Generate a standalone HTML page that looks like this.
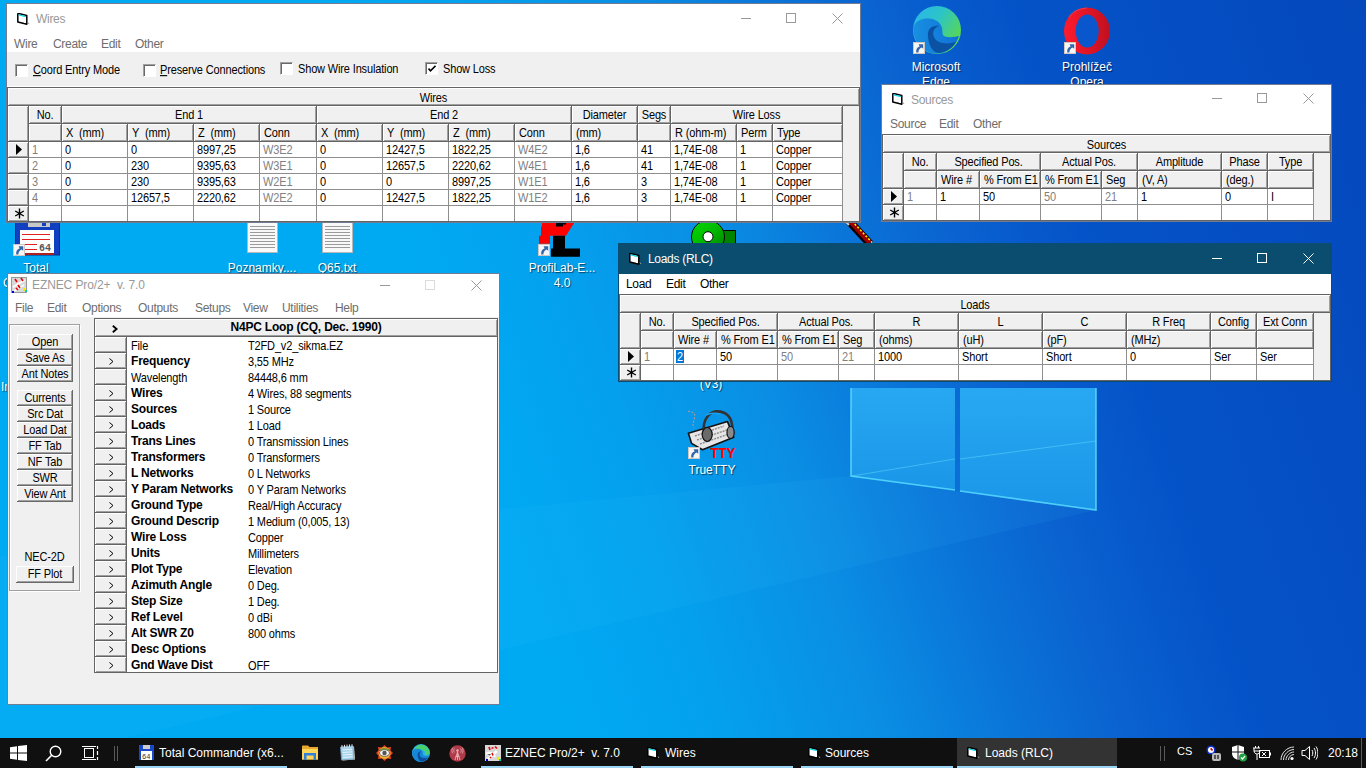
<!DOCTYPE html><html><head><meta charset="utf-8"><style>
html,body{margin:0;padding:0;width:1366px;height:768px;overflow:hidden;background:#0a78d8;}
div{position:absolute;box-sizing:border-box;}
.t{white-space:nowrap;font-family:'Liberation Sans',sans-serif;font-size:11px;line-height:16px;color:#000;letter-spacing:-0.15px;}
.s{transform:scaleY(1.12);transform-origin:0 4px;}
.m{font-size:12px;letter-spacing:-0.3px;}
.b{font-weight:bold;font-size:12px;letter-spacing:-0.2px;}
svg{position:absolute;}
</style></head><body>
<svg style="left:0;top:0" width="1366" height="768" viewBox="0 0 1366 768">
<defs>
<linearGradient id="bg1" gradientUnits="userSpaceOnUse" x1="0" y1="0" x2="1225" y2="-415"><stop offset="0.0000" stop-color="#00aaf3"/><stop offset="0.2319" stop-color="#00aaf3"/><stop offset="0.3479" stop-color="#04a0ee"/><stop offset="0.4638" stop-color="#0a8ee4"/><stop offset="0.5566" stop-color="#0a76d9"/><stop offset="0.6416" stop-color="#0a62d0"/><stop offset="0.7344" stop-color="#0553c8"/><stop offset="1.0000" stop-color="#0448bc"/></linearGradient>
<radialGradient id="glow" gradientUnits="userSpaceOnUse" cx="851" cy="460" r="420"><stop offset="0" stop-color="#50d0ff" stop-opacity="0.22"/><stop offset="1" stop-color="#50d0ff" stop-opacity="0"/></radialGradient>
<linearGradient id="pane" x1="0" y1="0" x2="0" y2="1"><stop offset="0" stop-color="#28a8f2"/><stop offset="1" stop-color="#1a96e8"/></linearGradient>
</defs>
<rect width="1366" height="768" fill="url(#bg1)"/>
<polygon points="851,476 1096,510 0,767 0,556" fill="#40c8ff" opacity="0.08"/>
<polygon points="851,388 955,388 955,490 851,476" fill="url(#pane)"/>
<polygon points="960,388 1096,388 1096,510 960,491" fill="url(#pane)"/>
<polyline points="851,388 851,476 955,490" fill="none" stroke="#58dcff" stroke-width="1.6" opacity="0.85"/>
<polyline points="960,491 1096,510 1096,388" fill="none" stroke="#58dcff" stroke-width="1.6" opacity="0.85"/>
<polyline points="852,476 955,459" fill="none" stroke="#6ae0ff" stroke-width="1" opacity="0.45"/>
<polyline points="960,459 1096,441" fill="none" stroke="#6ae0ff" stroke-width="1" opacity="0.45"/>
</svg>
<svg style="left:15px;top:222px" width="46" height="34" viewBox="0 0 46 34">
<rect x="0.5" y="0" width="44" height="33" fill="#1040c0" stroke="#0a2a80"/>
<rect x="13" y="1" width="22" height="4" fill="#c8c8c8"/><rect x="27" y="1" width="4" height="3" fill="#1040c0"/>
<rect x="5" y="8" width="34" height="25" fill="#fff"/>
<path d="M7 12.5H35M7 17.5H35M7 22.5H22M7 27.5H22" stroke="#e02020" stroke-width="1"/>
<rect x="5" y="31" width="34" height="2" fill="#b02020"/>
<text x="24" y="29" font-family="Liberation Mono" font-weight="bold" font-size="10" fill="#555">64</text>
</svg>
<svg style="left:13px;top:244px" width="12" height="12" viewBox="0 0 12 12"><rect x="0.5" y="0.5" width="11" height="11" fill="#f6f6f6" stroke="#d0c8c0"/><path d="M3.2 10.5C2.8 7.2 4.2 5 6.6 4.4L5.6 2.2H10.2V6.8L8.6 5.6C6.6 6.4 5.4 8.2 5.4 10.5Z" fill="#3466aa"/></svg>
<div class="t" style="left:6px;top:260px;width:60px;text-align:center;color:#fff;text-shadow:1px 1px 1px rgba(0,0,0,0.6);font-size:12px;letter-spacing:0;">Total</div>
<div class="t" style="left:-9px;top:275px;width:90px;text-align:center;color:#fff;text-shadow:1px 1px 1px rgba(0,0,0,0.6);font-size:12px;letter-spacing:0;">Commander</div>
<div class="t" style="left:1px;top:379px;color:#fff;text-shadow:1px 1px 1px rgba(0,0,0,0.6);font-size:12px;letter-spacing:0;">In</div>
<svg style="left:247px;top:222px" width="31" height="31" viewBox="0 0 31 31"><rect x="0.5" y="0.5" width="30" height="30" fill="#f8f8f8" stroke="#b8b8b8"/>
<path d="M3 4.5H28M3 7.5H28M3 10.5H28M3 13.5H28M3 16.5H28M3 19.5H28M3 22.5H28M3 25.5H28" stroke="#9a9a9a" stroke-width="1"/></svg>
<svg style="left:322px;top:222px" width="31" height="31" viewBox="0 0 31 31"><rect x="0.5" y="0.5" width="30" height="30" fill="#f8f8f8" stroke="#b8b8b8"/>
<path d="M3 4.5H28M3 7.5H28M3 10.5H28M3 13.5H28M3 16.5H28M3 19.5H28M3 22.5H28M3 25.5H28" stroke="#9a9a9a" stroke-width="1"/></svg>
<div class="t" style="left:222px;top:260px;width:80px;text-align:center;color:#fff;text-shadow:1px 1px 1px rgba(0,0,0,0.6);font-size:12px;letter-spacing:0;">Poznamky....</div>
<div class="t" style="left:307px;top:260px;width:60px;text-align:center;color:#fff;text-shadow:1px 1px 1px rgba(0,0,0,0.6);font-size:12px;letter-spacing:0;">Q65.txt</div>
<svg style="left:530px;top:218px" width="52" height="40" viewBox="0 0 52 40">
<path d="M12 4H44.7L36 17.8H20V25.8H9V17.8H11V8.6H12Z" fill="#f00"/>
<path d="M26 4H36V6.5H33V8.6H26Z" fill="#000"/>
<path d="M23 17.8H35V30.4H50V38.7H21V30.4H23Z" fill="#000"/>
</svg>
<svg style="left:538px;top:244px" width="12" height="12" viewBox="0 0 12 12"><rect x="0.5" y="0.5" width="11" height="11" fill="#f6f6f6" stroke="#d0c8c0"/><path d="M3.2 10.5C2.8 7.2 4.2 5 6.6 4.4L5.6 2.2H10.2V6.8L8.6 5.6C6.6 6.4 5.4 8.2 5.4 10.5Z" fill="#3466aa"/></svg>
<div class="t" style="left:522px;top:260px;width:80px;text-align:center;color:#fff;text-shadow:1px 1px 1px rgba(0,0,0,0.6);font-size:12px;letter-spacing:0;">ProfiLab-E...</div>
<div class="t" style="left:542px;top:275px;width:40px;text-align:center;color:#fff;text-shadow:1px 1px 1px rgba(0,0,0,0.6);font-size:12px;letter-spacing:0;">4.0</div>
<svg style="left:688px;top:219px" width="52" height="24" viewBox="0 0 52 24">
<defs><linearGradient id="gg" x1="0" y1="0" x2="1" y2="1"><stop offset="0" stop-color="#00dc00"/><stop offset="0.5" stop-color="#00b800"/><stop offset="1" stop-color="#007a00"/></linearGradient></defs>
<rect x="35.5" y="11.5" width="12" height="14" fill="#008400" stroke="#000"/>
<circle cx="20" cy="18" r="16.5" fill="url(#gg)" stroke="#000" stroke-width="1"/>
<circle cx="20" cy="17.7" r="5" fill="#fff" stroke="#000" stroke-width="1"/>
</svg>
<svg style="left:835px;top:222px" width="50" height="22" viewBox="0 0 50 22"><path d="M14 -1L35 22" stroke="#000" stroke-width="8"/><path d="M15 -1L35 21" stroke="#900" stroke-width="5"/><path d="M17 -1L37 20.5" stroke="#ff0" stroke-width="1.5" stroke-dasharray="2 2"/><path d="M11 0L14 3" stroke="#ccc" stroke-width="2"/></svg>
<div class="t" style="left:681px;top:376px;width:60px;text-align:center;color:#fff;text-shadow:1px 1px 1px rgba(0,0,0,0.6);font-size:12px;letter-spacing:0;">(V3)</div>
<svg style="left:687px;top:410px" width="50" height="50" viewBox="0 0 50 50">
<path d="M1 1.5C5 1 8.5 3 7.7 7C7 11 5 14 6.9 18" stroke="#9a9a9a" stroke-width="1.3" fill="none" stroke-dasharray="2 1.5"/>
<path d="M1.4 23.3L40.5 11.6L46.75 27.2L15.5 39.7L4.6 33.4Z" fill="#e6e6e6" stroke="#111" stroke-width="1.6" stroke-linejoin="round"/>
<path d="M8 26L37 16M10 30L40 20M13 34L42 24" stroke="#8a8a8a" stroke-width="1.4" stroke-dasharray="2 1"/>
<path d="M17 22C15 8 24 1.4 30 1.4C39 1.4 46 7 45.2 20" stroke="#333" stroke-width="2.6" fill="none"/>
<path d="M19 5C23 3 28 3 33 4" stroke="#1aa0f0" stroke-width="1.5" fill="none"/>
<ellipse cx="20.2" cy="24.5" rx="5" ry="7" fill="#6a6a6a" stroke="#111" stroke-width="1.2"/>
<ellipse cx="43.6" cy="22.5" rx="3.6" ry="6" fill="#8a8a8a" stroke="#111" stroke-width="1.2"/>
<text x="23.3" y="48.3" font-family="Liberation Sans" font-weight="bold" font-size="14" fill="#f00" textLength="25" lengthAdjust="spacingAndGlyphs">TTY</text>
</svg>
<svg style="left:688px;top:447px" width="12" height="12" viewBox="0 0 12 12"><rect x="0.5" y="0.5" width="11" height="11" fill="#f6f6f6" stroke="#d0c8c0"/><path d="M3.2 10.5C2.8 7.2 4.2 5 6.6 4.4L5.6 2.2H10.2V6.8L8.6 5.6C6.6 6.4 5.4 8.2 5.4 10.5Z" fill="#3466aa"/></svg>
<div class="t" style="left:677px;top:462px;width:70px;text-align:center;color:#fff;text-shadow:1px 1px 1px rgba(0,0,0,0.6);font-size:12px;letter-spacing:0;">TrueTTY</div>
<svg style="left:913px;top:6px" width="48" height="48" viewBox="0 0 48 48">
<defs><linearGradient id="eg1" x1="0" y1="0" x2="1" y2="0.6"><stop offset="0" stop-color="#2ab4ec"/><stop offset="0.5" stop-color="#2cc4c8"/><stop offset="1" stop-color="#5ad850"/></linearGradient>
<linearGradient id="eg2" x1="0" y1="0" x2="1" y2="0"><stop offset="0" stop-color="#1890e0"/><stop offset="1" stop-color="#1070d8"/></linearGradient></defs>
<circle cx="24" cy="24" r="24" fill="url(#eg1)"/>
<path d="M0.3 21C3 14 10 12 16 12.5C23 13 28 17 29 22C30 27 28 30 34 31C39 31.5 44 30.5 46 30C43 40 34 47.5 24 47.5C10 47.5 0 37 0.3 21Z" fill="url(#eg2)"/>
<path d="M15 30C14 23 19 19 26 20C21 22 19 26 21 31C23 37 33 39 43 36C39 43 31 47 25 47C19 46 15.5 38 15 30Z" fill="#0c52a4"/>
</svg>
<svg style="left:913px;top:42px" width="12" height="12" viewBox="0 0 12 12"><rect x="0.5" y="0.5" width="11" height="11" fill="#f6f6f6" stroke="#d0c8c0"/><path d="M3.2 10.5C2.8 7.2 4.2 5 6.6 4.4L5.6 2.2H10.2V6.8L8.6 5.6C6.6 6.4 5.4 8.2 5.4 10.5Z" fill="#3466aa"/></svg>
<div class="t" style="left:896px;top:59px;width:80px;text-align:center;color:#fff;text-shadow:1px 1px 1px rgba(0,0,0,0.6);font-size:12px;letter-spacing:0;">Microsoft</div>
<div class="t" style="left:906px;top:74px;width:60px;text-align:center;color:#fff;text-shadow:1px 1px 1px rgba(0,0,0,0.6);font-size:12px;letter-spacing:0;">Edge</div>
<svg style="left:1063px;top:7px" width="48" height="48" viewBox="0 0 48 48">
<defs><linearGradient id="og" x1="0" y1="0" x2="1" y2="0"><stop offset="0" stop-color="#ff1b2d"/><stop offset="1" stop-color="#c01020"/></linearGradient></defs>
<ellipse cx="24" cy="24" rx="23" ry="23.5" fill="url(#og)"/>
<ellipse cx="24.2" cy="24" rx="11.5" ry="16.5" fill="#0a56cc"/><path d="M6 10C10 4 16 2 24 1" stroke="#ff6070" stroke-width="1" fill="none" opacity="0.5"/>
</svg>
<svg style="left:1064px;top:42px" width="12" height="12" viewBox="0 0 12 12"><rect x="0.5" y="0.5" width="11" height="11" fill="#f6f6f6" stroke="#d0c8c0"/><path d="M3.2 10.5C2.8 7.2 4.2 5 6.6 4.4L5.6 2.2H10.2V6.8L8.6 5.6C6.6 6.4 5.4 8.2 5.4 10.5Z" fill="#3466aa"/></svg>
<div class="t" style="left:1047px;top:59px;width:80px;text-align:center;color:#fff;text-shadow:1px 1px 1px rgba(0,0,0,0.6);font-size:12px;letter-spacing:0;">Prohlížeč</div>
<div class="t" style="left:1057px;top:74px;width:60px;text-align:center;color:#fff;text-shadow:1px 1px 1px rgba(0,0,0,0.6);font-size:12px;letter-spacing:0;">Opera</div>
<div style="left:7px;top:273px;width:493px;height:432px;background:#f0f0f0;border:1px solid rgba(10,30,70,0.55);"></div>
<div style="left:8px;top:274px;width:491px;height:43px;background:#fff"></div>
<svg style="left:11px;top:277px" width="16" height="16" viewBox="0 0 16 16">
<rect x="0.5" y="0.5" width="15" height="15" fill="#d8d8d8" stroke="#999"/>
<path d="M2 10L14 3M3 14L13 8" stroke="#fff" stroke-width="2"/>
<path d="M4 2L6 5M10 1L12 4M7 8L9 11M5 11L7 13" stroke="#e00" stroke-width="1.6"/>
<rect x="1" y="14" width="2" height="2" fill="#00c"/><rect x="12" y="11" width="2" height="3" fill="#ee0"/><rect x="14" y="13" width="2" height="2" fill="#0cc"/>
</svg>
<div class="t m" style="left:32px;top:277px;color:#999;letter-spacing:-0.1px;">EZNEC Pro/2+&nbsp; v. 7.0</div>
<div style="left:380px;top:285px;width:10px;height:1px;background:#999"></div>
<div style="left:425px;top:280px;width:10px;height:10px;border:1px solid #dcdcdc"></div>
<svg style="left:471px;top:280px" width="11" height="11"><path d="M0.5 0.5L10.5 10.5M10.5 0.5L0.5 10.5" stroke="#999" stroke-width="1" fill="none"/></svg>
<div class="t m" style="left:15px;top:300px;color:#6d6d6d;">File</div>
<div class="t m" style="left:47px;top:300px;color:#6d6d6d;">Edit</div>
<div class="t m" style="left:82px;top:300px;color:#6d6d6d;">Options</div>
<div class="t m" style="left:138px;top:300px;color:#6d6d6d;">Outputs</div>
<div class="t m" style="left:195px;top:300px;color:#6d6d6d;">Setups</div>
<div class="t m" style="left:243px;top:300px;color:#6d6d6d;">View</div>
<div class="t m" style="left:282px;top:300px;color:#6d6d6d;">Utilities</div>
<div class="t m" style="left:335px;top:300px;color:#6d6d6d;">Help</div>
<div style="left:9px;top:324px;width:71px;height:267px;border:1px solid #a0a0a0;box-shadow:inset 1px 1px 0 #fff, 1px 1px 0 #fff;"></div>
<div style="left:17px;top:334px;width:56px;height:16px;background:#f0f0f0;border-right:1px solid #696969;border-bottom:1px solid #696969;box-shadow:inset 1px 1px 0 #fff,inset -1px -1px 0 #a0a0a0;"></div>
<div class="t s" style="left:17px;top:333px;width:56px;text-align:center;">Open</div>
<div style="left:17px;top:350px;width:56px;height:16px;background:#f0f0f0;border-right:1px solid #696969;border-bottom:1px solid #696969;box-shadow:inset 1px 1px 0 #fff,inset -1px -1px 0 #a0a0a0;"></div>
<div class="t s" style="left:17px;top:349px;width:56px;text-align:center;">Save As</div>
<div style="left:17px;top:366px;width:56px;height:16px;background:#f0f0f0;border-right:1px solid #696969;border-bottom:1px solid #696969;box-shadow:inset 1px 1px 0 #fff,inset -1px -1px 0 #a0a0a0;"></div>
<div class="t s" style="left:17px;top:365px;width:56px;text-align:center;">Ant Notes</div>
<div style="left:17px;top:390px;width:56px;height:16px;background:#f0f0f0;border-right:1px solid #696969;border-bottom:1px solid #696969;box-shadow:inset 1px 1px 0 #fff,inset -1px -1px 0 #a0a0a0;"></div>
<div class="t s" style="left:17px;top:389px;width:56px;text-align:center;">Currents</div>
<div style="left:17px;top:406px;width:56px;height:16px;background:#f0f0f0;border-right:1px solid #696969;border-bottom:1px solid #696969;box-shadow:inset 1px 1px 0 #fff,inset -1px -1px 0 #a0a0a0;"></div>
<div class="t s" style="left:17px;top:405px;width:56px;text-align:center;">Src Dat</div>
<div style="left:17px;top:422px;width:56px;height:16px;background:#f0f0f0;border-right:1px solid #696969;border-bottom:1px solid #696969;box-shadow:inset 1px 1px 0 #fff,inset -1px -1px 0 #a0a0a0;"></div>
<div class="t s" style="left:17px;top:421px;width:56px;text-align:center;">Load Dat</div>
<div style="left:17px;top:438px;width:56px;height:16px;background:#f0f0f0;border-right:1px solid #696969;border-bottom:1px solid #696969;box-shadow:inset 1px 1px 0 #fff,inset -1px -1px 0 #a0a0a0;"></div>
<div class="t s" style="left:17px;top:437px;width:56px;text-align:center;">FF Tab</div>
<div style="left:17px;top:454px;width:56px;height:16px;background:#f0f0f0;border-right:1px solid #696969;border-bottom:1px solid #696969;box-shadow:inset 1px 1px 0 #fff,inset -1px -1px 0 #a0a0a0;"></div>
<div class="t s" style="left:17px;top:453px;width:56px;text-align:center;">NF Tab</div>
<div style="left:17px;top:470px;width:56px;height:16px;background:#f0f0f0;border-right:1px solid #696969;border-bottom:1px solid #696969;box-shadow:inset 1px 1px 0 #fff,inset -1px -1px 0 #a0a0a0;"></div>
<div class="t s" style="left:17px;top:469px;width:56px;text-align:center;">SWR</div>
<div style="left:17px;top:486px;width:56px;height:16px;background:#f0f0f0;border-right:1px solid #696969;border-bottom:1px solid #696969;box-shadow:inset 1px 1px 0 #fff,inset -1px -1px 0 #a0a0a0;"></div>
<div class="t s" style="left:17px;top:485px;width:56px;text-align:center;">View Ant</div>
<div class="t s" style="left:9px;top:548px;width:71px;text-align:center;">NEC-2D</div>
<div style="left:16px;top:566px;width:58px;height:17px;background:#f0f0f0;border-right:1px solid #696969;border-bottom:1px solid #696969;box-shadow:inset 1px 1px 0 #fff,inset -1px -1px 0 #a0a0a0;"></div>
<div class="t s" style="left:16px;top:565px;width:58px;text-align:center;">FF Plot</div>
<div style="left:94px;top:318px;width:404px;height:355px;background:#fff;border:1px solid #646464;"></div>
<div style="left:95px;top:319px;width:402px;height:17px;background:#f0f0f0;box-shadow:inset 1px 1px 0 #fff,inset -1px -1px 0 #a0a0a0;"></div>
<div style="left:95px;top:336px;width:402px;height:1px;background:#646464"></div>
<svg style="left:112px;top:325px" width="6" height="8"><path d="M0.8 0.8L4.6 4L0.8 7.2" stroke="#000" stroke-width="1.8" fill="none"/></svg>
<div class="t b" style="left:126px;top:319px;width:360px;text-align:center;">N4PC Loop (CQ, Dec. 1990)</div>
<div style="left:95px;top:337px;width:31px;height:15px;background:#f0f0f0;box-shadow:inset 1px 1px 0 #fff,inset -1px -1px 0 #a0a0a0;"></div>
<div style="left:94px;top:352px;width:33px;height:1px;background:#646464"></div>
<div style="left:126px;top:336px;width:1px;height:17px;background:#646464"></div>
<div class="t s" style="left:131px;top:337px;">File</div>
<div class="t s" style="left:248px;top:337px;">T2FD_v2_sikma.EZ</div>
<div style="left:95px;top:353px;width:31px;height:15px;background:#f0f0f0;box-shadow:inset 1px 1px 0 #fff,inset -1px -1px 0 #a0a0a0;"></div>
<div style="left:94px;top:368px;width:33px;height:1px;background:#646464"></div>
<div style="left:126px;top:352px;width:1px;height:17px;background:#646464"></div>
<svg style="left:109px;top:358px" width="5" height="7"><path d="M0.5 0.5L4 3.5L0.5 6.5" stroke="#000" stroke-width="1" fill="none"/></svg>
<div class="t b" style="left:131px;top:353px;">Frequency</div>
<div class="t s" style="left:248px;top:353px;">3,55 MHz</div>
<div style="left:95px;top:369px;width:31px;height:15px;background:#f0f0f0;box-shadow:inset 1px 1px 0 #fff,inset -1px -1px 0 #a0a0a0;"></div>
<div style="left:94px;top:384px;width:33px;height:1px;background:#646464"></div>
<div style="left:126px;top:368px;width:1px;height:17px;background:#646464"></div>
<div class="t s" style="left:131px;top:369px;">Wavelength</div>
<div class="t s" style="left:248px;top:369px;">84448,6 mm</div>
<div style="left:95px;top:385px;width:31px;height:15px;background:#f0f0f0;box-shadow:inset 1px 1px 0 #fff,inset -1px -1px 0 #a0a0a0;"></div>
<div style="left:94px;top:400px;width:33px;height:1px;background:#646464"></div>
<div style="left:126px;top:384px;width:1px;height:17px;background:#646464"></div>
<svg style="left:109px;top:390px" width="5" height="7"><path d="M0.5 0.5L4 3.5L0.5 6.5" stroke="#000" stroke-width="1" fill="none"/></svg>
<div class="t b" style="left:131px;top:385px;">Wires</div>
<div class="t s" style="left:248px;top:385px;">4 Wires, 88 segments</div>
<div style="left:95px;top:401px;width:31px;height:15px;background:#f0f0f0;box-shadow:inset 1px 1px 0 #fff,inset -1px -1px 0 #a0a0a0;"></div>
<div style="left:94px;top:416px;width:33px;height:1px;background:#646464"></div>
<div style="left:126px;top:400px;width:1px;height:17px;background:#646464"></div>
<svg style="left:109px;top:406px" width="5" height="7"><path d="M0.5 0.5L4 3.5L0.5 6.5" stroke="#000" stroke-width="1" fill="none"/></svg>
<div class="t b" style="left:131px;top:401px;">Sources</div>
<div class="t s" style="left:248px;top:401px;">1 Source</div>
<div style="left:95px;top:417px;width:31px;height:15px;background:#f0f0f0;box-shadow:inset 1px 1px 0 #fff,inset -1px -1px 0 #a0a0a0;"></div>
<div style="left:94px;top:432px;width:33px;height:1px;background:#646464"></div>
<div style="left:126px;top:416px;width:1px;height:17px;background:#646464"></div>
<svg style="left:109px;top:422px" width="5" height="7"><path d="M0.5 0.5L4 3.5L0.5 6.5" stroke="#000" stroke-width="1" fill="none"/></svg>
<div class="t b" style="left:131px;top:417px;">Loads</div>
<div class="t s" style="left:248px;top:417px;">1 Load</div>
<div style="left:95px;top:433px;width:31px;height:15px;background:#f0f0f0;box-shadow:inset 1px 1px 0 #fff,inset -1px -1px 0 #a0a0a0;"></div>
<div style="left:94px;top:448px;width:33px;height:1px;background:#646464"></div>
<div style="left:126px;top:432px;width:1px;height:17px;background:#646464"></div>
<svg style="left:109px;top:438px" width="5" height="7"><path d="M0.5 0.5L4 3.5L0.5 6.5" stroke="#000" stroke-width="1" fill="none"/></svg>
<div class="t b" style="left:131px;top:433px;">Trans Lines</div>
<div class="t s" style="left:248px;top:433px;">0 Transmission Lines</div>
<div style="left:95px;top:449px;width:31px;height:15px;background:#f0f0f0;box-shadow:inset 1px 1px 0 #fff,inset -1px -1px 0 #a0a0a0;"></div>
<div style="left:94px;top:464px;width:33px;height:1px;background:#646464"></div>
<div style="left:126px;top:448px;width:1px;height:17px;background:#646464"></div>
<svg style="left:109px;top:454px" width="5" height="7"><path d="M0.5 0.5L4 3.5L0.5 6.5" stroke="#000" stroke-width="1" fill="none"/></svg>
<div class="t b" style="left:131px;top:449px;">Transformers</div>
<div class="t s" style="left:248px;top:449px;">0 Transformers</div>
<div style="left:95px;top:465px;width:31px;height:15px;background:#f0f0f0;box-shadow:inset 1px 1px 0 #fff,inset -1px -1px 0 #a0a0a0;"></div>
<div style="left:94px;top:480px;width:33px;height:1px;background:#646464"></div>
<div style="left:126px;top:464px;width:1px;height:17px;background:#646464"></div>
<svg style="left:109px;top:470px" width="5" height="7"><path d="M0.5 0.5L4 3.5L0.5 6.5" stroke="#000" stroke-width="1" fill="none"/></svg>
<div class="t b" style="left:131px;top:465px;">L Networks</div>
<div class="t s" style="left:248px;top:465px;">0 L Networks</div>
<div style="left:95px;top:481px;width:31px;height:15px;background:#f0f0f0;box-shadow:inset 1px 1px 0 #fff,inset -1px -1px 0 #a0a0a0;"></div>
<div style="left:94px;top:496px;width:33px;height:1px;background:#646464"></div>
<div style="left:126px;top:480px;width:1px;height:17px;background:#646464"></div>
<svg style="left:109px;top:486px" width="5" height="7"><path d="M0.5 0.5L4 3.5L0.5 6.5" stroke="#000" stroke-width="1" fill="none"/></svg>
<div class="t b" style="left:131px;top:481px;">Y Param Networks</div>
<div class="t s" style="left:248px;top:481px;">0 Y Param Networks</div>
<div style="left:95px;top:497px;width:31px;height:15px;background:#f0f0f0;box-shadow:inset 1px 1px 0 #fff,inset -1px -1px 0 #a0a0a0;"></div>
<div style="left:94px;top:512px;width:33px;height:1px;background:#646464"></div>
<div style="left:126px;top:496px;width:1px;height:17px;background:#646464"></div>
<svg style="left:109px;top:502px" width="5" height="7"><path d="M0.5 0.5L4 3.5L0.5 6.5" stroke="#000" stroke-width="1" fill="none"/></svg>
<div class="t b" style="left:131px;top:497px;">Ground Type</div>
<div class="t s" style="left:248px;top:497px;">Real/High Accuracy</div>
<div style="left:95px;top:513px;width:31px;height:15px;background:#f0f0f0;box-shadow:inset 1px 1px 0 #fff,inset -1px -1px 0 #a0a0a0;"></div>
<div style="left:94px;top:528px;width:33px;height:1px;background:#646464"></div>
<div style="left:126px;top:512px;width:1px;height:17px;background:#646464"></div>
<svg style="left:109px;top:518px" width="5" height="7"><path d="M0.5 0.5L4 3.5L0.5 6.5" stroke="#000" stroke-width="1" fill="none"/></svg>
<div class="t b" style="left:131px;top:513px;">Ground Descrip</div>
<div class="t s" style="left:248px;top:513px;">1 Medium (0,005, 13)</div>
<div style="left:95px;top:529px;width:31px;height:15px;background:#f0f0f0;box-shadow:inset 1px 1px 0 #fff,inset -1px -1px 0 #a0a0a0;"></div>
<div style="left:94px;top:544px;width:33px;height:1px;background:#646464"></div>
<div style="left:126px;top:528px;width:1px;height:17px;background:#646464"></div>
<svg style="left:109px;top:534px" width="5" height="7"><path d="M0.5 0.5L4 3.5L0.5 6.5" stroke="#000" stroke-width="1" fill="none"/></svg>
<div class="t b" style="left:131px;top:529px;">Wire Loss</div>
<div class="t s" style="left:248px;top:529px;">Copper</div>
<div style="left:95px;top:545px;width:31px;height:15px;background:#f0f0f0;box-shadow:inset 1px 1px 0 #fff,inset -1px -1px 0 #a0a0a0;"></div>
<div style="left:94px;top:560px;width:33px;height:1px;background:#646464"></div>
<div style="left:126px;top:544px;width:1px;height:17px;background:#646464"></div>
<svg style="left:109px;top:550px" width="5" height="7"><path d="M0.5 0.5L4 3.5L0.5 6.5" stroke="#000" stroke-width="1" fill="none"/></svg>
<div class="t b" style="left:131px;top:545px;">Units</div>
<div class="t s" style="left:248px;top:545px;">Millimeters</div>
<div style="left:95px;top:561px;width:31px;height:15px;background:#f0f0f0;box-shadow:inset 1px 1px 0 #fff,inset -1px -1px 0 #a0a0a0;"></div>
<div style="left:94px;top:576px;width:33px;height:1px;background:#646464"></div>
<div style="left:126px;top:560px;width:1px;height:17px;background:#646464"></div>
<svg style="left:109px;top:566px" width="5" height="7"><path d="M0.5 0.5L4 3.5L0.5 6.5" stroke="#000" stroke-width="1" fill="none"/></svg>
<div class="t b" style="left:131px;top:561px;">Plot Type</div>
<div class="t s" style="left:248px;top:561px;">Elevation</div>
<div style="left:95px;top:577px;width:31px;height:15px;background:#f0f0f0;box-shadow:inset 1px 1px 0 #fff,inset -1px -1px 0 #a0a0a0;"></div>
<div style="left:94px;top:592px;width:33px;height:1px;background:#646464"></div>
<div style="left:126px;top:576px;width:1px;height:17px;background:#646464"></div>
<svg style="left:109px;top:582px" width="5" height="7"><path d="M0.5 0.5L4 3.5L0.5 6.5" stroke="#000" stroke-width="1" fill="none"/></svg>
<div class="t b" style="left:131px;top:577px;">Azimuth Angle</div>
<div class="t s" style="left:248px;top:577px;">0 Deg.</div>
<div style="left:95px;top:593px;width:31px;height:15px;background:#f0f0f0;box-shadow:inset 1px 1px 0 #fff,inset -1px -1px 0 #a0a0a0;"></div>
<div style="left:94px;top:608px;width:33px;height:1px;background:#646464"></div>
<div style="left:126px;top:592px;width:1px;height:17px;background:#646464"></div>
<svg style="left:109px;top:598px" width="5" height="7"><path d="M0.5 0.5L4 3.5L0.5 6.5" stroke="#000" stroke-width="1" fill="none"/></svg>
<div class="t b" style="left:131px;top:593px;">Step Size</div>
<div class="t s" style="left:248px;top:593px;">1 Deg.</div>
<div style="left:95px;top:609px;width:31px;height:15px;background:#f0f0f0;box-shadow:inset 1px 1px 0 #fff,inset -1px -1px 0 #a0a0a0;"></div>
<div style="left:94px;top:624px;width:33px;height:1px;background:#646464"></div>
<div style="left:126px;top:608px;width:1px;height:17px;background:#646464"></div>
<svg style="left:109px;top:614px" width="5" height="7"><path d="M0.5 0.5L4 3.5L0.5 6.5" stroke="#000" stroke-width="1" fill="none"/></svg>
<div class="t b" style="left:131px;top:609px;">Ref Level</div>
<div class="t s" style="left:248px;top:609px;">0 dBi</div>
<div style="left:95px;top:625px;width:31px;height:15px;background:#f0f0f0;box-shadow:inset 1px 1px 0 #fff,inset -1px -1px 0 #a0a0a0;"></div>
<div style="left:94px;top:640px;width:33px;height:1px;background:#646464"></div>
<div style="left:126px;top:624px;width:1px;height:17px;background:#646464"></div>
<svg style="left:109px;top:630px" width="5" height="7"><path d="M0.5 0.5L4 3.5L0.5 6.5" stroke="#000" stroke-width="1" fill="none"/></svg>
<div class="t b" style="left:131px;top:625px;">Alt SWR Z0</div>
<div class="t s" style="left:248px;top:625px;">800 ohms</div>
<div style="left:95px;top:641px;width:31px;height:15px;background:#f0f0f0;box-shadow:inset 1px 1px 0 #fff,inset -1px -1px 0 #a0a0a0;"></div>
<div style="left:94px;top:656px;width:33px;height:1px;background:#646464"></div>
<div style="left:126px;top:640px;width:1px;height:17px;background:#646464"></div>
<svg style="left:109px;top:646px" width="5" height="7"><path d="M0.5 0.5L4 3.5L0.5 6.5" stroke="#000" stroke-width="1" fill="none"/></svg>
<div class="t b" style="left:131px;top:641px;">Desc Options</div>
<div style="left:95px;top:657px;width:31px;height:15px;background:#f0f0f0;box-shadow:inset 1px 1px 0 #fff,inset -1px -1px 0 #a0a0a0;"></div>
<div style="left:94px;top:672px;width:33px;height:1px;background:#646464"></div>
<div style="left:126px;top:656px;width:1px;height:17px;background:#646464"></div>
<svg style="left:109px;top:662px" width="5" height="7"><path d="M0.5 0.5L4 3.5L0.5 6.5" stroke="#000" stroke-width="1" fill="none"/></svg>
<div class="t b" style="left:131px;top:657px;">Gnd Wave Dist</div>
<div class="t s" style="left:248px;top:657px;">OFF</div>
<div style="left:6px;top:3px;width:855px;height:220px;background:#f0f0f0;border:1px solid rgba(10,30,70,0.55);"></div>
<div style="left:7px;top:4px;width:853px;height:48px;background:#fff"></div>
<svg style="left:17px;top:13px" width="13" height="13" viewBox="0 0 13 13"><path d="M0.8 0.8H2.8L9.8 2.6V11.2L7 10.6L0.8 9Z" fill="#fff" stroke="#000" stroke-width="1.5" stroke-linejoin="round"/><path d="M1.6 1.9L9 3.7" stroke="#18d8e8" stroke-width="1.3" fill="none"/><path d="M11 9.5L12 11" stroke="#999" stroke-width="1"/></svg>
<div class="t m" style="left:36px;top:11px;color:#999;">Wires</div>
<div style="left:741px;top:18px;width:10px;height:1px;background:#999"></div>
<div style="left:786px;top:13px;width:10px;height:10px;border:1px solid #999"></div>
<svg style="left:832px;top:13px" width="11" height="11"><path d="M0.5 0.5L10.5 10.5M10.5 0.5L0.5 10.5" stroke="#999" stroke-width="1" fill="none"/></svg>
<div class="t m" style="left:14px;top:36px;color:#6d6d6d;">Wire</div>
<div class="t m" style="left:53px;top:36px;color:#6d6d6d;">Create</div>
<div class="t m" style="left:101px;top:36px;color:#6d6d6d;">Edit</div>
<div class="t m" style="left:135px;top:36px;color:#6d6d6d;">Other</div>
<div style="left:7px;top:52px;width:853px;height:1px;background:#f0f0f0"></div>
<div style="left:15px;top:64px;width:13px;height:13px;background:#fff;border-top:1px solid #a0a0a0;border-left:1px solid #a0a0a0;border-right:1px solid #fff;border-bottom:1px solid #fff;box-shadow:inset 1px 1px 0 #696969;"></div>
<div class="t s" style="left:33px;top:61px;"><u>C</u>oord Entry Mode</div>
<div style="left:143px;top:64px;width:13px;height:13px;background:#fff;border-top:1px solid #a0a0a0;border-left:1px solid #a0a0a0;border-right:1px solid #fff;border-bottom:1px solid #fff;box-shadow:inset 1px 1px 0 #696969;"></div>
<div class="t s" style="left:160px;top:61px;"><u>P</u>reserve Connections</div>
<div style="left:280px;top:62px;width:13px;height:13px;background:#fff;border-top:1px solid #a0a0a0;border-left:1px solid #a0a0a0;border-right:1px solid #fff;border-bottom:1px solid #fff;box-shadow:inset 1px 1px 0 #696969;"></div>
<div class="t s" style="left:298px;top:60px;">Show Wire Insulation</div>
<div style="left:425px;top:62px;width:13px;height:13px;background:#fff;border-top:1px solid #a0a0a0;border-left:1px solid #a0a0a0;border-right:1px solid #fff;border-bottom:1px solid #fff;box-shadow:inset 1px 1px 0 #696969;"></div>
<svg style="left:428px;top:65px" width="8" height="8"><path d="M0.5 3.5L2.5 5.8L7.5 0.8" stroke="#000" stroke-width="1.6" fill="none"/></svg>
<div class="t s" style="left:443px;top:60px;">Show Loss</div>
<div style="left:7px;top:86px;width:853px;height:1px;background:#fff"></div>
<div style="left:7px;top:87px;width:853px;height:135px;background:#f0f0f0;"></div>
<div style="left:8px;top:88px;width:851px;height:17px;background:#f0f0f0;box-shadow:inset 1px 1px 0 #fff,inset -1px -1px 0 #a0a0a0;"></div>
<div class="t s" style="left:8px;top:89px;width:851px;text-align:center;">Wires</div>
<div style="left:8px;top:105px;width:851px;height:1px;background:#646464"></div>
<div style="left:29px;top:142px;width:814px;height:79px;background:#fff"></div>
<div style="left:8px;top:106px;width:20px;height:35px;background:#f0f0f0;box-shadow:inset 1px 1px 0 #fff,inset -1px -1px 0 #a0a0a0;"></div>
<div style="left:28px;top:105px;width:1px;height:37px;background:#646464"></div>
<div style="left:7px;top:141px;width:22px;height:1px;background:#646464"></div>
<div style="left:29px;top:106px;width:32px;height:17px;background:#f0f0f0;box-shadow:inset 1px 1px 0 #fff,inset -1px -1px 0 #a0a0a0;"></div>
<div style="left:61px;top:105px;width:1px;height:19px;background:#646464"></div>
<div style="left:28px;top:123px;width:34px;height:1px;background:#646464"></div>
<div class="t s" style="left:29px;top:106px;width:32px;text-align:center;">No.</div>
<div style="left:29px;top:124px;width:32px;height:17px;background:#f0f0f0;box-shadow:inset 1px 1px 0 #fff,inset -1px -1px 0 #a0a0a0;"></div>
<div style="left:61px;top:123px;width:1px;height:19px;background:#646464"></div>
<div style="left:28px;top:141px;width:34px;height:1px;background:#646464"></div>
<div style="left:62px;top:106px;width:254px;height:17px;background:#f0f0f0;box-shadow:inset 1px 1px 0 #fff,inset -1px -1px 0 #a0a0a0;"></div>
<div style="left:316px;top:105px;width:1px;height:19px;background:#646464"></div>
<div style="left:61px;top:123px;width:256px;height:1px;background:#646464"></div>
<div class="t s" style="left:62px;top:106px;width:254px;text-align:center;">End 1</div>
<div style="left:317px;top:106px;width:254px;height:17px;background:#f0f0f0;box-shadow:inset 1px 1px 0 #fff,inset -1px -1px 0 #a0a0a0;"></div>
<div style="left:571px;top:105px;width:1px;height:19px;background:#646464"></div>
<div style="left:316px;top:123px;width:256px;height:1px;background:#646464"></div>
<div class="t s" style="left:317px;top:106px;width:254px;text-align:center;">End 2</div>
<div style="left:62px;top:124px;width:65px;height:17px;background:#f0f0f0;box-shadow:inset 1px 1px 0 #fff,inset -1px -1px 0 #a0a0a0;"></div>
<div style="left:127px;top:123px;width:1px;height:19px;background:#646464"></div>
<div style="left:61px;top:141px;width:67px;height:1px;background:#646464"></div>
<div class="t s" style="left:66px;top:124px;">X&nbsp; (mm)</div>
<div style="left:128px;top:124px;width:65px;height:17px;background:#f0f0f0;box-shadow:inset 1px 1px 0 #fff,inset -1px -1px 0 #a0a0a0;"></div>
<div style="left:193px;top:123px;width:1px;height:19px;background:#646464"></div>
<div style="left:127px;top:141px;width:67px;height:1px;background:#646464"></div>
<div class="t s" style="left:132px;top:124px;">Y&nbsp; (mm)</div>
<div style="left:194px;top:124px;width:65px;height:17px;background:#f0f0f0;box-shadow:inset 1px 1px 0 #fff,inset -1px -1px 0 #a0a0a0;"></div>
<div style="left:259px;top:123px;width:1px;height:19px;background:#646464"></div>
<div style="left:193px;top:141px;width:67px;height:1px;background:#646464"></div>
<div class="t s" style="left:198px;top:124px;">Z&nbsp; (mm)</div>
<div style="left:260px;top:124px;width:56px;height:17px;background:#f0f0f0;box-shadow:inset 1px 1px 0 #fff,inset -1px -1px 0 #a0a0a0;"></div>
<div style="left:316px;top:123px;width:1px;height:19px;background:#646464"></div>
<div style="left:259px;top:141px;width:58px;height:1px;background:#646464"></div>
<div class="t s" style="left:264px;top:124px;">Conn</div>
<div style="left:317px;top:124px;width:65px;height:17px;background:#f0f0f0;box-shadow:inset 1px 1px 0 #fff,inset -1px -1px 0 #a0a0a0;"></div>
<div style="left:382px;top:123px;width:1px;height:19px;background:#646464"></div>
<div style="left:316px;top:141px;width:67px;height:1px;background:#646464"></div>
<div class="t s" style="left:321px;top:124px;">X&nbsp; (mm)</div>
<div style="left:383px;top:124px;width:65px;height:17px;background:#f0f0f0;box-shadow:inset 1px 1px 0 #fff,inset -1px -1px 0 #a0a0a0;"></div>
<div style="left:448px;top:123px;width:1px;height:19px;background:#646464"></div>
<div style="left:382px;top:141px;width:67px;height:1px;background:#646464"></div>
<div class="t s" style="left:387px;top:124px;">Y&nbsp; (mm)</div>
<div style="left:449px;top:124px;width:65px;height:17px;background:#f0f0f0;box-shadow:inset 1px 1px 0 #fff,inset -1px -1px 0 #a0a0a0;"></div>
<div style="left:514px;top:123px;width:1px;height:19px;background:#646464"></div>
<div style="left:448px;top:141px;width:67px;height:1px;background:#646464"></div>
<div class="t s" style="left:453px;top:124px;">Z&nbsp; (mm)</div>
<div style="left:515px;top:124px;width:56px;height:17px;background:#f0f0f0;box-shadow:inset 1px 1px 0 #fff,inset -1px -1px 0 #a0a0a0;"></div>
<div style="left:571px;top:123px;width:1px;height:19px;background:#646464"></div>
<div style="left:514px;top:141px;width:58px;height:1px;background:#646464"></div>
<div class="t s" style="left:519px;top:124px;">Conn</div>
<div style="left:572px;top:106px;width:65px;height:17px;background:#f0f0f0;box-shadow:inset 1px 1px 0 #fff,inset -1px -1px 0 #a0a0a0;"></div>
<div style="left:637px;top:105px;width:1px;height:19px;background:#646464"></div>
<div style="left:571px;top:123px;width:67px;height:1px;background:#646464"></div>
<div class="t s" style="left:572px;top:106px;width:65px;text-align:center;">Diameter</div>
<div style="left:572px;top:124px;width:65px;height:17px;background:#f0f0f0;box-shadow:inset 1px 1px 0 #fff,inset -1px -1px 0 #a0a0a0;"></div>
<div style="left:637px;top:123px;width:1px;height:19px;background:#646464"></div>
<div style="left:571px;top:141px;width:67px;height:1px;background:#646464"></div>
<div class="t s" style="left:576px;top:124px;">(mm)</div>
<div style="left:638px;top:106px;width:32px;height:17px;background:#f0f0f0;box-shadow:inset 1px 1px 0 #fff,inset -1px -1px 0 #a0a0a0;"></div>
<div style="left:670px;top:105px;width:1px;height:19px;background:#646464"></div>
<div style="left:637px;top:123px;width:34px;height:1px;background:#646464"></div>
<div class="t s" style="left:638px;top:106px;width:32px;text-align:center;">Segs</div>
<div style="left:638px;top:124px;width:32px;height:17px;background:#f0f0f0;box-shadow:inset 1px 1px 0 #fff,inset -1px -1px 0 #a0a0a0;"></div>
<div style="left:670px;top:123px;width:1px;height:19px;background:#646464"></div>
<div style="left:637px;top:141px;width:34px;height:1px;background:#646464"></div>
<div style="left:671px;top:106px;width:171px;height:17px;background:#f0f0f0;box-shadow:inset 1px 1px 0 #fff,inset -1px -1px 0 #a0a0a0;"></div>
<div style="left:842px;top:105px;width:1px;height:19px;background:#646464"></div>
<div style="left:670px;top:123px;width:173px;height:1px;background:#646464"></div>
<div class="t s" style="left:671px;top:106px;width:171px;text-align:center;">Wire Loss</div>
<div style="left:671px;top:124px;width:65px;height:17px;background:#f0f0f0;box-shadow:inset 1px 1px 0 #fff,inset -1px -1px 0 #a0a0a0;"></div>
<div style="left:736px;top:123px;width:1px;height:19px;background:#646464"></div>
<div style="left:670px;top:141px;width:67px;height:1px;background:#646464"></div>
<div class="t s" style="left:675px;top:124px;">R (ohm-m)</div>
<div style="left:737px;top:124px;width:35px;height:17px;background:#f0f0f0;box-shadow:inset 1px 1px 0 #fff,inset -1px -1px 0 #a0a0a0;"></div>
<div style="left:772px;top:123px;width:1px;height:19px;background:#646464"></div>
<div style="left:736px;top:141px;width:37px;height:1px;background:#646464"></div>
<div class="t s" style="left:741px;top:124px;">Perm</div>
<div style="left:773px;top:124px;width:69px;height:17px;background:#f0f0f0;box-shadow:inset 1px 1px 0 #fff,inset -1px -1px 0 #a0a0a0;"></div>
<div style="left:842px;top:123px;width:1px;height:19px;background:#646464"></div>
<div style="left:772px;top:141px;width:71px;height:1px;background:#646464"></div>
<div class="t s" style="left:777px;top:124px;">Type</div>
<div style="left:8px;top:142px;width:20px;height:15px;background:#f0f0f0;box-shadow:inset 1px 1px 0 #fff,inset -1px -1px 0 #a0a0a0;"></div>
<div style="left:7px;top:157px;width:22px;height:1px;background:#646464"></div>
<div style="left:28px;top:141px;width:1px;height:17px;background:#646464"></div>
<div style="left:29px;top:157px;width:814px;height:1px;background:#8e8e8e"></div>
<div style="left:61px;top:142px;width:1px;height:16px;background:#8e8e8e"></div>
<div style="left:127px;top:142px;width:1px;height:16px;background:#8e8e8e"></div>
<div style="left:193px;top:142px;width:1px;height:16px;background:#8e8e8e"></div>
<div style="left:259px;top:142px;width:1px;height:16px;background:#8e8e8e"></div>
<div style="left:316px;top:142px;width:1px;height:16px;background:#8e8e8e"></div>
<div style="left:382px;top:142px;width:1px;height:16px;background:#8e8e8e"></div>
<div style="left:448px;top:142px;width:1px;height:16px;background:#8e8e8e"></div>
<div style="left:514px;top:142px;width:1px;height:16px;background:#8e8e8e"></div>
<div style="left:571px;top:142px;width:1px;height:16px;background:#8e8e8e"></div>
<div style="left:637px;top:142px;width:1px;height:16px;background:#8e8e8e"></div>
<div style="left:670px;top:142px;width:1px;height:16px;background:#8e8e8e"></div>
<div style="left:736px;top:142px;width:1px;height:16px;background:#8e8e8e"></div>
<div style="left:772px;top:142px;width:1px;height:16px;background:#8e8e8e"></div>
<div style="left:842px;top:142px;width:1px;height:16px;background:#8e8e8e"></div>
<div class="t s" style="left:32px;top:141px;color:#808080;">1</div>
<div class="t s" style="left:65px;top:141px;color:#000;">0</div>
<div class="t s" style="left:131px;top:141px;color:#000;">0</div>
<div class="t s" style="left:197px;top:141px;color:#000;">8997,25</div>
<div class="t s" style="left:263px;top:141px;color:#808080;">W3E2</div>
<div class="t s" style="left:320px;top:141px;color:#000;">0</div>
<div class="t s" style="left:386px;top:141px;color:#000;">12427,5</div>
<div class="t s" style="left:452px;top:141px;color:#000;">1822,25</div>
<div class="t s" style="left:518px;top:141px;color:#808080;">W4E2</div>
<div class="t s" style="left:575px;top:141px;color:#000;">1,6</div>
<div class="t s" style="left:641px;top:141px;color:#000;">41</div>
<div class="t s" style="left:674px;top:141px;color:#000;">1,74E-08</div>
<div class="t s" style="left:740px;top:141px;color:#000;">1</div>
<div class="t s" style="left:776px;top:141px;color:#000;">Copper</div>
<div style="left:8px;top:158px;width:20px;height:15px;background:#f0f0f0;box-shadow:inset 1px 1px 0 #fff,inset -1px -1px 0 #a0a0a0;"></div>
<div style="left:7px;top:173px;width:22px;height:1px;background:#646464"></div>
<div style="left:28px;top:157px;width:1px;height:17px;background:#646464"></div>
<div style="left:29px;top:173px;width:814px;height:1px;background:#8e8e8e"></div>
<div style="left:61px;top:158px;width:1px;height:16px;background:#8e8e8e"></div>
<div style="left:127px;top:158px;width:1px;height:16px;background:#8e8e8e"></div>
<div style="left:193px;top:158px;width:1px;height:16px;background:#8e8e8e"></div>
<div style="left:259px;top:158px;width:1px;height:16px;background:#8e8e8e"></div>
<div style="left:316px;top:158px;width:1px;height:16px;background:#8e8e8e"></div>
<div style="left:382px;top:158px;width:1px;height:16px;background:#8e8e8e"></div>
<div style="left:448px;top:158px;width:1px;height:16px;background:#8e8e8e"></div>
<div style="left:514px;top:158px;width:1px;height:16px;background:#8e8e8e"></div>
<div style="left:571px;top:158px;width:1px;height:16px;background:#8e8e8e"></div>
<div style="left:637px;top:158px;width:1px;height:16px;background:#8e8e8e"></div>
<div style="left:670px;top:158px;width:1px;height:16px;background:#8e8e8e"></div>
<div style="left:736px;top:158px;width:1px;height:16px;background:#8e8e8e"></div>
<div style="left:772px;top:158px;width:1px;height:16px;background:#8e8e8e"></div>
<div style="left:842px;top:158px;width:1px;height:16px;background:#8e8e8e"></div>
<div class="t s" style="left:32px;top:157px;color:#808080;">2</div>
<div class="t s" style="left:65px;top:157px;color:#000;">0</div>
<div class="t s" style="left:131px;top:157px;color:#000;">230</div>
<div class="t s" style="left:197px;top:157px;color:#000;">9395,63</div>
<div class="t s" style="left:263px;top:157px;color:#808080;">W3E1</div>
<div class="t s" style="left:320px;top:157px;color:#000;">0</div>
<div class="t s" style="left:386px;top:157px;color:#000;">12657,5</div>
<div class="t s" style="left:452px;top:157px;color:#000;">2220,62</div>
<div class="t s" style="left:518px;top:157px;color:#808080;">W4E1</div>
<div class="t s" style="left:575px;top:157px;color:#000;">1,6</div>
<div class="t s" style="left:641px;top:157px;color:#000;">41</div>
<div class="t s" style="left:674px;top:157px;color:#000;">1,74E-08</div>
<div class="t s" style="left:740px;top:157px;color:#000;">1</div>
<div class="t s" style="left:776px;top:157px;color:#000;">Copper</div>
<div style="left:8px;top:174px;width:20px;height:15px;background:#f0f0f0;box-shadow:inset 1px 1px 0 #fff,inset -1px -1px 0 #a0a0a0;"></div>
<div style="left:7px;top:189px;width:22px;height:1px;background:#646464"></div>
<div style="left:28px;top:173px;width:1px;height:17px;background:#646464"></div>
<div style="left:29px;top:189px;width:814px;height:1px;background:#8e8e8e"></div>
<div style="left:61px;top:174px;width:1px;height:16px;background:#8e8e8e"></div>
<div style="left:127px;top:174px;width:1px;height:16px;background:#8e8e8e"></div>
<div style="left:193px;top:174px;width:1px;height:16px;background:#8e8e8e"></div>
<div style="left:259px;top:174px;width:1px;height:16px;background:#8e8e8e"></div>
<div style="left:316px;top:174px;width:1px;height:16px;background:#8e8e8e"></div>
<div style="left:382px;top:174px;width:1px;height:16px;background:#8e8e8e"></div>
<div style="left:448px;top:174px;width:1px;height:16px;background:#8e8e8e"></div>
<div style="left:514px;top:174px;width:1px;height:16px;background:#8e8e8e"></div>
<div style="left:571px;top:174px;width:1px;height:16px;background:#8e8e8e"></div>
<div style="left:637px;top:174px;width:1px;height:16px;background:#8e8e8e"></div>
<div style="left:670px;top:174px;width:1px;height:16px;background:#8e8e8e"></div>
<div style="left:736px;top:174px;width:1px;height:16px;background:#8e8e8e"></div>
<div style="left:772px;top:174px;width:1px;height:16px;background:#8e8e8e"></div>
<div style="left:842px;top:174px;width:1px;height:16px;background:#8e8e8e"></div>
<div class="t s" style="left:32px;top:173px;color:#808080;">3</div>
<div class="t s" style="left:65px;top:173px;color:#000;">0</div>
<div class="t s" style="left:131px;top:173px;color:#000;">230</div>
<div class="t s" style="left:197px;top:173px;color:#000;">9395,63</div>
<div class="t s" style="left:263px;top:173px;color:#808080;">W2E1</div>
<div class="t s" style="left:320px;top:173px;color:#000;">0</div>
<div class="t s" style="left:386px;top:173px;color:#000;">0</div>
<div class="t s" style="left:452px;top:173px;color:#000;">8997,25</div>
<div class="t s" style="left:518px;top:173px;color:#808080;">W1E1</div>
<div class="t s" style="left:575px;top:173px;color:#000;">1,6</div>
<div class="t s" style="left:641px;top:173px;color:#000;">3</div>
<div class="t s" style="left:674px;top:173px;color:#000;">1,74E-08</div>
<div class="t s" style="left:740px;top:173px;color:#000;">1</div>
<div class="t s" style="left:776px;top:173px;color:#000;">Copper</div>
<div style="left:8px;top:190px;width:20px;height:15px;background:#f0f0f0;box-shadow:inset 1px 1px 0 #fff,inset -1px -1px 0 #a0a0a0;"></div>
<div style="left:7px;top:205px;width:22px;height:1px;background:#646464"></div>
<div style="left:28px;top:189px;width:1px;height:17px;background:#646464"></div>
<div style="left:29px;top:205px;width:814px;height:1px;background:#8e8e8e"></div>
<div style="left:61px;top:190px;width:1px;height:16px;background:#8e8e8e"></div>
<div style="left:127px;top:190px;width:1px;height:16px;background:#8e8e8e"></div>
<div style="left:193px;top:190px;width:1px;height:16px;background:#8e8e8e"></div>
<div style="left:259px;top:190px;width:1px;height:16px;background:#8e8e8e"></div>
<div style="left:316px;top:190px;width:1px;height:16px;background:#8e8e8e"></div>
<div style="left:382px;top:190px;width:1px;height:16px;background:#8e8e8e"></div>
<div style="left:448px;top:190px;width:1px;height:16px;background:#8e8e8e"></div>
<div style="left:514px;top:190px;width:1px;height:16px;background:#8e8e8e"></div>
<div style="left:571px;top:190px;width:1px;height:16px;background:#8e8e8e"></div>
<div style="left:637px;top:190px;width:1px;height:16px;background:#8e8e8e"></div>
<div style="left:670px;top:190px;width:1px;height:16px;background:#8e8e8e"></div>
<div style="left:736px;top:190px;width:1px;height:16px;background:#8e8e8e"></div>
<div style="left:772px;top:190px;width:1px;height:16px;background:#8e8e8e"></div>
<div style="left:842px;top:190px;width:1px;height:16px;background:#8e8e8e"></div>
<div class="t s" style="left:32px;top:189px;color:#808080;">4</div>
<div class="t s" style="left:65px;top:189px;color:#000;">0</div>
<div class="t s" style="left:131px;top:189px;color:#000;">12657,5</div>
<div class="t s" style="left:197px;top:189px;color:#000;">2220,62</div>
<div class="t s" style="left:263px;top:189px;color:#808080;">W2E2</div>
<div class="t s" style="left:320px;top:189px;color:#000;">0</div>
<div class="t s" style="left:386px;top:189px;color:#000;">12427,5</div>
<div class="t s" style="left:452px;top:189px;color:#000;">1822,25</div>
<div class="t s" style="left:518px;top:189px;color:#808080;">W1E2</div>
<div class="t s" style="left:575px;top:189px;color:#000;">1,6</div>
<div class="t s" style="left:641px;top:189px;color:#000;">3</div>
<div class="t s" style="left:674px;top:189px;color:#000;">1,74E-08</div>
<div class="t s" style="left:740px;top:189px;color:#000;">1</div>
<div class="t s" style="left:776px;top:189px;color:#000;">Copper</div>
<div style="left:8px;top:206px;width:20px;height:15px;background:#f0f0f0;box-shadow:inset 1px 1px 0 #fff,inset -1px -1px 0 #a0a0a0;"></div>
<div style="left:7px;top:221px;width:22px;height:1px;background:#646464"></div>
<div style="left:28px;top:205px;width:1px;height:17px;background:#646464"></div>
<div style="left:29px;top:221px;width:814px;height:1px;background:#8e8e8e"></div>
<div style="left:61px;top:206px;width:1px;height:16px;background:#8e8e8e"></div>
<div style="left:127px;top:206px;width:1px;height:16px;background:#8e8e8e"></div>
<div style="left:193px;top:206px;width:1px;height:16px;background:#8e8e8e"></div>
<div style="left:259px;top:206px;width:1px;height:16px;background:#8e8e8e"></div>
<div style="left:316px;top:206px;width:1px;height:16px;background:#8e8e8e"></div>
<div style="left:382px;top:206px;width:1px;height:16px;background:#8e8e8e"></div>
<div style="left:448px;top:206px;width:1px;height:16px;background:#8e8e8e"></div>
<div style="left:514px;top:206px;width:1px;height:16px;background:#8e8e8e"></div>
<div style="left:571px;top:206px;width:1px;height:16px;background:#8e8e8e"></div>
<div style="left:637px;top:206px;width:1px;height:16px;background:#8e8e8e"></div>
<div style="left:670px;top:206px;width:1px;height:16px;background:#8e8e8e"></div>
<div style="left:736px;top:206px;width:1px;height:16px;background:#8e8e8e"></div>
<div style="left:772px;top:206px;width:1px;height:16px;background:#8e8e8e"></div>
<div style="left:842px;top:206px;width:1px;height:16px;background:#8e8e8e"></div>
<div style="left:859px;top:87px;width:1px;height:135px;background:#646464"></div>
<div style="left:7px;top:87px;width:1px;height:135px;background:#646464"></div>
<div style="left:7px;top:87px;width:853px;height:1px;background:#646464"></div>
<div style="left:7px;top:221px;width:853px;height:1px;background:#646464"></div>
<svg style="left:16px;top:144px" width="8" height="11"><path d="M0 0L6 5.5L0 11Z" fill="#000"/></svg>
<svg style="left:14px;top:208px" width="11" height="11"><path d="M5.5 0.5V10.5M1.2 3L9.8 8M1.2 8L9.8 3" stroke="#000" stroke-width="1.4" fill="none"/></svg>
<div style="left:881px;top:84px;width:451px;height:138px;background:#f0f0f0;border:1px solid rgba(10,30,70,0.55);"></div>
<div style="left:882px;top:85px;width:449px;height:49px;background:#fff"></div>
<svg style="left:892px;top:93px" width="13" height="13" viewBox="0 0 13 13"><path d="M0.8 0.8H2.8L9.8 2.6V11.2L7 10.6L0.8 9Z" fill="#fff" stroke="#000" stroke-width="1.5" stroke-linejoin="round"/><path d="M1.6 1.9L9 3.7" stroke="#18d8e8" stroke-width="1.3" fill="none"/><path d="M11 9.5L12 11" stroke="#999" stroke-width="1"/></svg>
<div class="t m" style="left:911px;top:92px;color:#999;">Sources</div>
<div style="left:1212px;top:98px;width:10px;height:1px;background:#999"></div>
<div style="left:1257px;top:93px;width:10px;height:10px;border:1px solid #999"></div>
<svg style="left:1303px;top:93px" width="11" height="11"><path d="M0.5 0.5L10.5 10.5M10.5 0.5L0.5 10.5" stroke="#999" stroke-width="1" fill="none"/></svg>
<div class="t m" style="left:890px;top:116px;color:#6d6d6d;">Source</div>
<div class="t m" style="left:939px;top:116px;color:#6d6d6d;">Edit</div>
<div class="t m" style="left:973px;top:116px;color:#6d6d6d;">Other</div>
<div style="left:882px;top:134px;width:449px;height:87px;background:#f0f0f0;"></div>
<div style="left:883px;top:135px;width:447px;height:17px;background:#f0f0f0;box-shadow:inset 1px 1px 0 #fff,inset -1px -1px 0 #a0a0a0;"></div>
<div class="t s" style="left:883px;top:136px;width:447px;text-align:center;">Sources</div>
<div style="left:883px;top:152px;width:447px;height:1px;background:#646464"></div>
<div style="left:904px;top:189px;width:410px;height:31px;background:#fff"></div>
<div style="left:883px;top:153px;width:20px;height:35px;background:#f0f0f0;box-shadow:inset 1px 1px 0 #fff,inset -1px -1px 0 #a0a0a0;"></div>
<div style="left:903px;top:152px;width:1px;height:37px;background:#646464"></div>
<div style="left:882px;top:188px;width:22px;height:1px;background:#646464"></div>
<div style="left:904px;top:153px;width:32px;height:17px;background:#f0f0f0;box-shadow:inset 1px 1px 0 #fff,inset -1px -1px 0 #a0a0a0;"></div>
<div style="left:936px;top:152px;width:1px;height:19px;background:#646464"></div>
<div style="left:903px;top:170px;width:34px;height:1px;background:#646464"></div>
<div class="t s" style="left:904px;top:153px;width:32px;text-align:center;">No.</div>
<div style="left:904px;top:171px;width:32px;height:17px;background:#f0f0f0;box-shadow:inset 1px 1px 0 #fff,inset -1px -1px 0 #a0a0a0;"></div>
<div style="left:936px;top:170px;width:1px;height:19px;background:#646464"></div>
<div style="left:903px;top:188px;width:34px;height:1px;background:#646464"></div>
<div style="left:937px;top:153px;width:103px;height:17px;background:#f0f0f0;box-shadow:inset 1px 1px 0 #fff,inset -1px -1px 0 #a0a0a0;"></div>
<div style="left:1040px;top:152px;width:1px;height:19px;background:#646464"></div>
<div style="left:936px;top:170px;width:105px;height:1px;background:#646464"></div>
<div class="t s" style="left:937px;top:153px;width:103px;text-align:center;">Specified Pos.</div>
<div style="left:1041px;top:153px;width:96px;height:17px;background:#f0f0f0;box-shadow:inset 1px 1px 0 #fff,inset -1px -1px 0 #a0a0a0;"></div>
<div style="left:1137px;top:152px;width:1px;height:19px;background:#646464"></div>
<div style="left:1040px;top:170px;width:98px;height:1px;background:#646464"></div>
<div class="t s" style="left:1041px;top:153px;width:96px;text-align:center;">Actual Pos.</div>
<div style="left:937px;top:171px;width:42px;height:17px;background:#f0f0f0;box-shadow:inset 1px 1px 0 #fff,inset -1px -1px 0 #a0a0a0;"></div>
<div style="left:979px;top:170px;width:1px;height:19px;background:#646464"></div>
<div style="left:936px;top:188px;width:44px;height:1px;background:#646464"></div>
<div class="t s" style="left:941px;top:171px;">Wire #</div>
<div style="left:980px;top:171px;width:60px;height:17px;background:#f0f0f0;box-shadow:inset 1px 1px 0 #fff,inset -1px -1px 0 #a0a0a0;"></div>
<div style="left:1040px;top:170px;width:1px;height:19px;background:#646464"></div>
<div style="left:979px;top:188px;width:62px;height:1px;background:#646464"></div>
<div class="t s" style="left:984px;top:171px;">% From E1</div>
<div style="left:1041px;top:171px;width:60px;height:17px;background:#f0f0f0;box-shadow:inset 1px 1px 0 #fff,inset -1px -1px 0 #a0a0a0;"></div>
<div style="left:1101px;top:170px;width:1px;height:19px;background:#646464"></div>
<div style="left:1040px;top:188px;width:62px;height:1px;background:#646464"></div>
<div class="t s" style="left:1045px;top:171px;">% From E1</div>
<div style="left:1102px;top:171px;width:35px;height:17px;background:#f0f0f0;box-shadow:inset 1px 1px 0 #fff,inset -1px -1px 0 #a0a0a0;"></div>
<div style="left:1137px;top:170px;width:1px;height:19px;background:#646464"></div>
<div style="left:1101px;top:188px;width:37px;height:1px;background:#646464"></div>
<div class="t s" style="left:1106px;top:171px;">Seg</div>
<div style="left:1138px;top:153px;width:83px;height:17px;background:#f0f0f0;box-shadow:inset 1px 1px 0 #fff,inset -1px -1px 0 #a0a0a0;"></div>
<div style="left:1221px;top:152px;width:1px;height:19px;background:#646464"></div>
<div style="left:1137px;top:170px;width:85px;height:1px;background:#646464"></div>
<div class="t s" style="left:1138px;top:153px;width:83px;text-align:center;">Amplitude</div>
<div style="left:1138px;top:171px;width:83px;height:17px;background:#f0f0f0;box-shadow:inset 1px 1px 0 #fff,inset -1px -1px 0 #a0a0a0;"></div>
<div style="left:1221px;top:170px;width:1px;height:19px;background:#646464"></div>
<div style="left:1137px;top:188px;width:85px;height:1px;background:#646464"></div>
<div class="t s" style="left:1142px;top:171px;">(V, A)</div>
<div style="left:1222px;top:153px;width:45px;height:17px;background:#f0f0f0;box-shadow:inset 1px 1px 0 #fff,inset -1px -1px 0 #a0a0a0;"></div>
<div style="left:1267px;top:152px;width:1px;height:19px;background:#646464"></div>
<div style="left:1221px;top:170px;width:47px;height:1px;background:#646464"></div>
<div class="t s" style="left:1222px;top:153px;width:45px;text-align:center;">Phase</div>
<div style="left:1222px;top:171px;width:45px;height:17px;background:#f0f0f0;box-shadow:inset 1px 1px 0 #fff,inset -1px -1px 0 #a0a0a0;"></div>
<div style="left:1267px;top:170px;width:1px;height:19px;background:#646464"></div>
<div style="left:1221px;top:188px;width:47px;height:1px;background:#646464"></div>
<div class="t s" style="left:1226px;top:171px;">(deg.)</div>
<div style="left:1268px;top:153px;width:45px;height:17px;background:#f0f0f0;box-shadow:inset 1px 1px 0 #fff,inset -1px -1px 0 #a0a0a0;"></div>
<div style="left:1313px;top:152px;width:1px;height:19px;background:#646464"></div>
<div style="left:1267px;top:170px;width:47px;height:1px;background:#646464"></div>
<div class="t s" style="left:1268px;top:153px;width:45px;text-align:center;">Type</div>
<div style="left:1268px;top:171px;width:45px;height:17px;background:#f0f0f0;box-shadow:inset 1px 1px 0 #fff,inset -1px -1px 0 #a0a0a0;"></div>
<div style="left:1313px;top:170px;width:1px;height:19px;background:#646464"></div>
<div style="left:1267px;top:188px;width:47px;height:1px;background:#646464"></div>
<div style="left:883px;top:189px;width:20px;height:15px;background:#f0f0f0;box-shadow:inset 1px 1px 0 #fff,inset -1px -1px 0 #a0a0a0;"></div>
<div style="left:882px;top:204px;width:22px;height:1px;background:#646464"></div>
<div style="left:903px;top:188px;width:1px;height:17px;background:#646464"></div>
<div style="left:904px;top:204px;width:410px;height:1px;background:#8e8e8e"></div>
<div style="left:936px;top:189px;width:1px;height:16px;background:#8e8e8e"></div>
<div style="left:979px;top:189px;width:1px;height:16px;background:#8e8e8e"></div>
<div style="left:1040px;top:189px;width:1px;height:16px;background:#8e8e8e"></div>
<div style="left:1101px;top:189px;width:1px;height:16px;background:#8e8e8e"></div>
<div style="left:1137px;top:189px;width:1px;height:16px;background:#8e8e8e"></div>
<div style="left:1221px;top:189px;width:1px;height:16px;background:#8e8e8e"></div>
<div style="left:1267px;top:189px;width:1px;height:16px;background:#8e8e8e"></div>
<div style="left:1313px;top:189px;width:1px;height:16px;background:#8e8e8e"></div>
<div class="t s" style="left:907px;top:188px;color:#808080;">1</div>
<div class="t s" style="left:940px;top:188px;color:#000;">1</div>
<div class="t s" style="left:983px;top:188px;color:#000;">50</div>
<div class="t s" style="left:1044px;top:188px;color:#808080;">50</div>
<div class="t s" style="left:1105px;top:188px;color:#808080;">21</div>
<div class="t s" style="left:1141px;top:188px;color:#000;">1</div>
<div class="t s" style="left:1225px;top:188px;color:#000;">0</div>
<div class="t s" style="left:1271px;top:188px;color:#000;">I</div>
<div style="left:883px;top:205px;width:20px;height:15px;background:#f0f0f0;box-shadow:inset 1px 1px 0 #fff,inset -1px -1px 0 #a0a0a0;"></div>
<div style="left:882px;top:220px;width:22px;height:1px;background:#646464"></div>
<div style="left:903px;top:204px;width:1px;height:17px;background:#646464"></div>
<div style="left:904px;top:220px;width:410px;height:1px;background:#8e8e8e"></div>
<div style="left:936px;top:205px;width:1px;height:16px;background:#8e8e8e"></div>
<div style="left:979px;top:205px;width:1px;height:16px;background:#8e8e8e"></div>
<div style="left:1040px;top:205px;width:1px;height:16px;background:#8e8e8e"></div>
<div style="left:1101px;top:205px;width:1px;height:16px;background:#8e8e8e"></div>
<div style="left:1137px;top:205px;width:1px;height:16px;background:#8e8e8e"></div>
<div style="left:1221px;top:205px;width:1px;height:16px;background:#8e8e8e"></div>
<div style="left:1267px;top:205px;width:1px;height:16px;background:#8e8e8e"></div>
<div style="left:1313px;top:205px;width:1px;height:16px;background:#8e8e8e"></div>
<div style="left:1330px;top:134px;width:1px;height:87px;background:#646464"></div>
<div style="left:882px;top:134px;width:1px;height:87px;background:#646464"></div>
<div style="left:882px;top:134px;width:449px;height:1px;background:#646464"></div>
<div style="left:882px;top:220px;width:449px;height:1px;background:#646464"></div>
<svg style="left:891px;top:191px" width="8" height="11"><path d="M0 0L6 5.5L0 11Z" fill="#000"/></svg>
<svg style="left:889px;top:207px" width="11" height="11"><path d="M5.5 0.5V10.5M1.2 3L9.8 8M1.2 8L9.8 3" stroke="#000" stroke-width="1.4" fill="none"/></svg>
<div style="left:618px;top:243px;width:714px;height:139px;background:#f0f0f0;border:1px solid #0b4d6e;"></div>
<div style="left:618px;top:243px;width:714px;height:31px;background:#0b4d6e"></div>
<div style="left:619px;top:274px;width:712px;height:20px;background:#fff"></div>
<svg style="left:629px;top:253px" width="13" height="13" viewBox="0 0 13 13"><path d="M0.8 0.8H2.8L9.8 2.6V11.2L7 10.6L0.8 9Z" fill="#fff" stroke="#000" stroke-width="1.5" stroke-linejoin="round"/><path d="M1.6 1.9L9 3.7" stroke="#18d8e8" stroke-width="1.3" fill="none"/><path d="M11 9.5L12 11" stroke="#999" stroke-width="1"/></svg>
<div class="t m" style="left:648px;top:251px;color:#fff;">Loads (RLC)</div>
<div style="left:1212px;top:258px;width:10px;height:1px;background:#fff"></div>
<div style="left:1257px;top:253px;width:10px;height:10px;border:1px solid #fff"></div>
<svg style="left:1303px;top:253px" width="11" height="11"><path d="M0.5 0.5L10.5 10.5M10.5 0.5L0.5 10.5" stroke="#fff" stroke-width="1" fill="none"/></svg>
<div class="t m" style="left:626px;top:276px;color:#000;">Load</div>
<div class="t m" style="left:666px;top:276px;color:#000;">Edit</div>
<div class="t m" style="left:700px;top:276px;color:#000;">Other</div>
<div style="left:619px;top:294px;width:712px;height:87px;background:#f0f0f0;"></div>
<div style="left:620px;top:295px;width:710px;height:17px;background:#f0f0f0;box-shadow:inset 1px 1px 0 #fff,inset -1px -1px 0 #a0a0a0;"></div>
<div class="t s" style="left:620px;top:296px;width:710px;text-align:center;">Loads</div>
<div style="left:620px;top:312px;width:710px;height:1px;background:#646464"></div>
<div style="left:641px;top:349px;width:673px;height:31px;background:#fff"></div>
<div style="left:620px;top:313px;width:20px;height:35px;background:#f0f0f0;box-shadow:inset 1px 1px 0 #fff,inset -1px -1px 0 #a0a0a0;"></div>
<div style="left:640px;top:312px;width:1px;height:37px;background:#646464"></div>
<div style="left:619px;top:348px;width:22px;height:1px;background:#646464"></div>
<div style="left:641px;top:313px;width:32px;height:17px;background:#f0f0f0;box-shadow:inset 1px 1px 0 #fff,inset -1px -1px 0 #a0a0a0;"></div>
<div style="left:673px;top:312px;width:1px;height:19px;background:#646464"></div>
<div style="left:640px;top:330px;width:34px;height:1px;background:#646464"></div>
<div class="t s" style="left:641px;top:313px;width:32px;text-align:center;">No.</div>
<div style="left:641px;top:331px;width:32px;height:17px;background:#f0f0f0;box-shadow:inset 1px 1px 0 #fff,inset -1px -1px 0 #a0a0a0;"></div>
<div style="left:673px;top:330px;width:1px;height:19px;background:#646464"></div>
<div style="left:640px;top:348px;width:34px;height:1px;background:#646464"></div>
<div style="left:674px;top:313px;width:103px;height:17px;background:#f0f0f0;box-shadow:inset 1px 1px 0 #fff,inset -1px -1px 0 #a0a0a0;"></div>
<div style="left:777px;top:312px;width:1px;height:19px;background:#646464"></div>
<div style="left:673px;top:330px;width:105px;height:1px;background:#646464"></div>
<div class="t s" style="left:674px;top:313px;width:103px;text-align:center;">Specified Pos.</div>
<div style="left:778px;top:313px;width:96px;height:17px;background:#f0f0f0;box-shadow:inset 1px 1px 0 #fff,inset -1px -1px 0 #a0a0a0;"></div>
<div style="left:874px;top:312px;width:1px;height:19px;background:#646464"></div>
<div style="left:777px;top:330px;width:98px;height:1px;background:#646464"></div>
<div class="t s" style="left:778px;top:313px;width:96px;text-align:center;">Actual Pos.</div>
<div style="left:674px;top:331px;width:42px;height:17px;background:#f0f0f0;box-shadow:inset 1px 1px 0 #fff,inset -1px -1px 0 #a0a0a0;"></div>
<div style="left:716px;top:330px;width:1px;height:19px;background:#646464"></div>
<div style="left:673px;top:348px;width:44px;height:1px;background:#646464"></div>
<div class="t s" style="left:678px;top:331px;">Wire #</div>
<div style="left:717px;top:331px;width:60px;height:17px;background:#f0f0f0;box-shadow:inset 1px 1px 0 #fff,inset -1px -1px 0 #a0a0a0;"></div>
<div style="left:777px;top:330px;width:1px;height:19px;background:#646464"></div>
<div style="left:716px;top:348px;width:62px;height:1px;background:#646464"></div>
<div class="t s" style="left:721px;top:331px;">% From E1</div>
<div style="left:778px;top:331px;width:60px;height:17px;background:#f0f0f0;box-shadow:inset 1px 1px 0 #fff,inset -1px -1px 0 #a0a0a0;"></div>
<div style="left:838px;top:330px;width:1px;height:19px;background:#646464"></div>
<div style="left:777px;top:348px;width:62px;height:1px;background:#646464"></div>
<div class="t s" style="left:782px;top:331px;">% From E1</div>
<div style="left:839px;top:331px;width:35px;height:17px;background:#f0f0f0;box-shadow:inset 1px 1px 0 #fff,inset -1px -1px 0 #a0a0a0;"></div>
<div style="left:874px;top:330px;width:1px;height:19px;background:#646464"></div>
<div style="left:838px;top:348px;width:37px;height:1px;background:#646464"></div>
<div class="t s" style="left:843px;top:331px;">Seg</div>
<div style="left:875px;top:313px;width:83px;height:17px;background:#f0f0f0;box-shadow:inset 1px 1px 0 #fff,inset -1px -1px 0 #a0a0a0;"></div>
<div style="left:958px;top:312px;width:1px;height:19px;background:#646464"></div>
<div style="left:874px;top:330px;width:85px;height:1px;background:#646464"></div>
<div class="t s" style="left:875px;top:313px;width:83px;text-align:center;">R</div>
<div style="left:875px;top:331px;width:83px;height:17px;background:#f0f0f0;box-shadow:inset 1px 1px 0 #fff,inset -1px -1px 0 #a0a0a0;"></div>
<div style="left:958px;top:330px;width:1px;height:19px;background:#646464"></div>
<div style="left:874px;top:348px;width:85px;height:1px;background:#646464"></div>
<div class="t s" style="left:879px;top:331px;">(ohms)</div>
<div style="left:959px;top:313px;width:83px;height:17px;background:#f0f0f0;box-shadow:inset 1px 1px 0 #fff,inset -1px -1px 0 #a0a0a0;"></div>
<div style="left:1042px;top:312px;width:1px;height:19px;background:#646464"></div>
<div style="left:958px;top:330px;width:85px;height:1px;background:#646464"></div>
<div class="t s" style="left:959px;top:313px;width:83px;text-align:center;">L</div>
<div style="left:959px;top:331px;width:83px;height:17px;background:#f0f0f0;box-shadow:inset 1px 1px 0 #fff,inset -1px -1px 0 #a0a0a0;"></div>
<div style="left:1042px;top:330px;width:1px;height:19px;background:#646464"></div>
<div style="left:958px;top:348px;width:85px;height:1px;background:#646464"></div>
<div class="t s" style="left:963px;top:331px;">(uH)</div>
<div style="left:1043px;top:313px;width:83px;height:17px;background:#f0f0f0;box-shadow:inset 1px 1px 0 #fff,inset -1px -1px 0 #a0a0a0;"></div>
<div style="left:1126px;top:312px;width:1px;height:19px;background:#646464"></div>
<div style="left:1042px;top:330px;width:85px;height:1px;background:#646464"></div>
<div class="t s" style="left:1043px;top:313px;width:83px;text-align:center;">C</div>
<div style="left:1043px;top:331px;width:83px;height:17px;background:#f0f0f0;box-shadow:inset 1px 1px 0 #fff,inset -1px -1px 0 #a0a0a0;"></div>
<div style="left:1126px;top:330px;width:1px;height:19px;background:#646464"></div>
<div style="left:1042px;top:348px;width:85px;height:1px;background:#646464"></div>
<div class="t s" style="left:1047px;top:331px;">(pF)</div>
<div style="left:1127px;top:313px;width:83px;height:17px;background:#f0f0f0;box-shadow:inset 1px 1px 0 #fff,inset -1px -1px 0 #a0a0a0;"></div>
<div style="left:1210px;top:312px;width:1px;height:19px;background:#646464"></div>
<div style="left:1126px;top:330px;width:85px;height:1px;background:#646464"></div>
<div class="t s" style="left:1127px;top:313px;width:83px;text-align:center;">R Freq</div>
<div style="left:1127px;top:331px;width:83px;height:17px;background:#f0f0f0;box-shadow:inset 1px 1px 0 #fff,inset -1px -1px 0 #a0a0a0;"></div>
<div style="left:1210px;top:330px;width:1px;height:19px;background:#646464"></div>
<div style="left:1126px;top:348px;width:85px;height:1px;background:#646464"></div>
<div class="t s" style="left:1131px;top:331px;">(MHz)</div>
<div style="left:1211px;top:313px;width:45px;height:17px;background:#f0f0f0;box-shadow:inset 1px 1px 0 #fff,inset -1px -1px 0 #a0a0a0;"></div>
<div style="left:1256px;top:312px;width:1px;height:19px;background:#646464"></div>
<div style="left:1210px;top:330px;width:47px;height:1px;background:#646464"></div>
<div class="t s" style="left:1211px;top:313px;width:45px;text-align:center;">Config</div>
<div style="left:1211px;top:331px;width:45px;height:17px;background:#f0f0f0;box-shadow:inset 1px 1px 0 #fff,inset -1px -1px 0 #a0a0a0;"></div>
<div style="left:1256px;top:330px;width:1px;height:19px;background:#646464"></div>
<div style="left:1210px;top:348px;width:47px;height:1px;background:#646464"></div>
<div style="left:1257px;top:313px;width:56px;height:17px;background:#f0f0f0;box-shadow:inset 1px 1px 0 #fff,inset -1px -1px 0 #a0a0a0;"></div>
<div style="left:1313px;top:312px;width:1px;height:19px;background:#646464"></div>
<div style="left:1256px;top:330px;width:58px;height:1px;background:#646464"></div>
<div class="t s" style="left:1257px;top:313px;width:56px;text-align:center;">Ext Conn</div>
<div style="left:1257px;top:331px;width:56px;height:17px;background:#f0f0f0;box-shadow:inset 1px 1px 0 #fff,inset -1px -1px 0 #a0a0a0;"></div>
<div style="left:1313px;top:330px;width:1px;height:19px;background:#646464"></div>
<div style="left:1256px;top:348px;width:58px;height:1px;background:#646464"></div>
<div style="left:620px;top:349px;width:20px;height:15px;background:#f0f0f0;box-shadow:inset 1px 1px 0 #fff,inset -1px -1px 0 #a0a0a0;"></div>
<div style="left:619px;top:364px;width:22px;height:1px;background:#646464"></div>
<div style="left:640px;top:348px;width:1px;height:17px;background:#646464"></div>
<div style="left:641px;top:364px;width:673px;height:1px;background:#8e8e8e"></div>
<div style="left:673px;top:349px;width:1px;height:16px;background:#8e8e8e"></div>
<div style="left:716px;top:349px;width:1px;height:16px;background:#8e8e8e"></div>
<div style="left:777px;top:349px;width:1px;height:16px;background:#8e8e8e"></div>
<div style="left:838px;top:349px;width:1px;height:16px;background:#8e8e8e"></div>
<div style="left:874px;top:349px;width:1px;height:16px;background:#8e8e8e"></div>
<div style="left:958px;top:349px;width:1px;height:16px;background:#8e8e8e"></div>
<div style="left:1042px;top:349px;width:1px;height:16px;background:#8e8e8e"></div>
<div style="left:1126px;top:349px;width:1px;height:16px;background:#8e8e8e"></div>
<div style="left:1210px;top:349px;width:1px;height:16px;background:#8e8e8e"></div>
<div style="left:1256px;top:349px;width:1px;height:16px;background:#8e8e8e"></div>
<div style="left:1313px;top:349px;width:1px;height:16px;background:#8e8e8e"></div>
<div class="t s" style="left:644px;top:348px;color:#808080;">1</div>
<div style="left:676px;top:350px;width:8px;height:13px;background:#0078d7"></div>
<div class="t s" style="left:677px;top:348px;color:#fff;">2</div>
<div class="t s" style="left:720px;top:348px;color:#000;">50</div>
<div class="t s" style="left:781px;top:348px;color:#808080;">50</div>
<div class="t s" style="left:842px;top:348px;color:#808080;">21</div>
<div class="t s" style="left:878px;top:348px;color:#000;">1000</div>
<div class="t s" style="left:962px;top:348px;color:#000;">Short</div>
<div class="t s" style="left:1046px;top:348px;color:#000;">Short</div>
<div class="t s" style="left:1130px;top:348px;color:#000;">0</div>
<div class="t s" style="left:1214px;top:348px;color:#000;">Ser</div>
<div class="t s" style="left:1260px;top:348px;color:#000;">Ser</div>
<div style="left:620px;top:365px;width:20px;height:15px;background:#f0f0f0;box-shadow:inset 1px 1px 0 #fff,inset -1px -1px 0 #a0a0a0;"></div>
<div style="left:619px;top:380px;width:22px;height:1px;background:#646464"></div>
<div style="left:640px;top:364px;width:1px;height:17px;background:#646464"></div>
<div style="left:641px;top:380px;width:673px;height:1px;background:#8e8e8e"></div>
<div style="left:673px;top:365px;width:1px;height:16px;background:#8e8e8e"></div>
<div style="left:716px;top:365px;width:1px;height:16px;background:#8e8e8e"></div>
<div style="left:777px;top:365px;width:1px;height:16px;background:#8e8e8e"></div>
<div style="left:838px;top:365px;width:1px;height:16px;background:#8e8e8e"></div>
<div style="left:874px;top:365px;width:1px;height:16px;background:#8e8e8e"></div>
<div style="left:958px;top:365px;width:1px;height:16px;background:#8e8e8e"></div>
<div style="left:1042px;top:365px;width:1px;height:16px;background:#8e8e8e"></div>
<div style="left:1126px;top:365px;width:1px;height:16px;background:#8e8e8e"></div>
<div style="left:1210px;top:365px;width:1px;height:16px;background:#8e8e8e"></div>
<div style="left:1256px;top:365px;width:1px;height:16px;background:#8e8e8e"></div>
<div style="left:1313px;top:365px;width:1px;height:16px;background:#8e8e8e"></div>
<div style="left:1330px;top:294px;width:1px;height:87px;background:#646464"></div>
<div style="left:619px;top:294px;width:1px;height:87px;background:#646464"></div>
<div style="left:619px;top:294px;width:712px;height:1px;background:#646464"></div>
<div style="left:619px;top:380px;width:712px;height:1px;background:#646464"></div>
<svg style="left:628px;top:351px" width="8" height="11"><path d="M0 0L6 5.5L0 11Z" fill="#000"/></svg>
<svg style="left:626px;top:367px" width="11" height="11"><path d="M5.5 0.5V10.5M1.2 3L9.8 8M1.2 8L9.8 3" stroke="#000" stroke-width="1.4" fill="none"/></svg>
<div style="left:0px;top:738px;width:1366px;height:30px;background:#101010"></div>
<svg style="left:10px;top:745px" width="17" height="16" viewBox="0 0 17 16"><path d="M0 2.2L7 1.2V7.5H0ZM8 1L17 0V7.5H8ZM0 8.5H7V14.8L0 13.8ZM8 8.5H17V16L8 15Z" fill="#fff"/></svg>
<svg style="left:45px;top:745px" width="17" height="17" viewBox="0 0 17 17"><circle cx="10.5" cy="6.5" r="5.3" stroke="#fff" stroke-width="1.4" fill="none"/><path d="M6.7 10.3L1 16" stroke="#fff" stroke-width="1.6"/></svg>
<svg style="left:82px;top:745px" width="17" height="16" viewBox="0 0 17 16"><rect x="2.5" y="3.5" width="9" height="9" stroke="#fff" fill="none"/><path d="M0 1.5H14M0 14.5H14M15.5 1V4M15.5 6V10M15.5 12V15" stroke="#fff" stroke-width="1.2"/></svg>
<div style="left:114px;top:746px;width:1px;height:15px;background:#5a5a5a"></div>
<div style="left:117px;top:746px;width:1px;height:15px;background:#5a5a5a"></div>
<svg style="left:139px;top:745px" width="15" height="15" viewBox="0 0 15 15"><rect width="15" height="15" fill="#1848c8"/><rect x="4" y="0" width="7" height="4" fill="#ccc"/><rect x="2" y="6" width="11" height="9" fill="#fff"/><text x="3" y="14" font-family="Liberation Mono" font-size="7" fill="#333">64</text></svg>
<div class="t" style="left:159px;top:745px;color:#fff;font-size:12px;letter-spacing:0;">Total Commander (x6...</div>
<div style="left:135px;top:766px;width:152px;height:2px;background:#9ad4f4"></div>
<svg style="left:302px;top:745px" width="17" height="15" viewBox="0 0 17 15"><path d="M0 1.5C0 0.8 0.5 0.5 1 0.5H6L7.5 2H16V14.5H0Z" fill="#e8a830"/><rect x="0" y="4" width="16" height="10.5" fill="#ffd55c"/><path d="M2 15V8H14V15H11.5V10.5H4.5V15Z" fill="#2f80d8"/></svg>
<svg style="left:339px;top:744px" width="17" height="17" viewBox="0 0 17 17"><path d="M2.5 3L15 2.5L16 15.5L3.5 16.5Z" fill="#e8e0d0"/><path d="M1.5 3L14 2L15 15L2.5 16Z" fill="#a8d4ee" stroke="#6a98b8" stroke-width="0.8"/><path d="M3.5 6L13 5.3M3.7 8.5L13.2 7.8M3.9 11L13.4 10.3M4.1 13.5L13.6 12.8" stroke="#e8f4fc" stroke-width="1"/><path d="M3 1V4M5.5 0.8V3.8M8 0.6V3.6M10.5 0.4V3.4M13 0.2V3.2" stroke="#ddd" stroke-width="1"/></svg>
<svg style="left:376px;top:745px" width="17" height="16" viewBox="0 0 17 16"><path d="M8.5 0L11 2.5L15 2L14.5 5.5L17 8L14.5 10.5L15 14L11 13.5L8.5 16L6 13.5L2 14L2.5 10.5L0 8L2.5 5.5L2 2L6 2.5Z" fill="#e84020"/><circle cx="8.5" cy="8" r="6" fill="#f0b030"/><ellipse cx="8.5" cy="8" rx="5" ry="3.3" fill="#f4f4f4" stroke="#555" stroke-width="0.8"/><circle cx="8.5" cy="8" r="2.2" fill="#555"/><path d="M3 6C5 3 12 3 14 6" stroke="#3a8a3a" stroke-width="1" fill="none"/></svg>
<svg style="left:412px;top:744px" width="18" height="18" viewBox="0 0 48 48">
<circle cx="24" cy="24" r="24" fill="#2cb4e8"/><path d="M24 2C36 2 46 10 47 22C45 30 38 31 34 30C38 26 36 18 28 16C20 14 12 18 8 24C4 14 12 2 24 2Z" fill="#48d070"/>
<path d="M0.3 21C3 14 10 12 16 12.5C23 13 28 17 29 22C30 27 28 30 34 31C39 31.5 44 30.5 46 30C43 40 34 47.5 24 47.5C10 47.5 0 37 0.3 21Z" fill="#1688d8"/>
<path d="M15 30C14 23 19 19 26 20C21 22 19 26 21 31C23 37 33 39 43 36C39 43 31 47 25 47C19 46 15.5 38 15 30Z" fill="#0c4ea0"/></svg>
<svg style="left:449px;top:745px" width="17" height="17" viewBox="0 0 17 17"><circle cx="8.5" cy="8.5" r="8.2" fill="#b03a48"/><path d="M8.5 6V15M6 15L8.5 7L11 15M6.5 11.5H10.5" stroke="#e8b0b8" stroke-width="0.9" fill="none"/><circle cx="8.5" cy="5.5" r="1.2" fill="#e8b0b8"/><path d="M5.5 3.5C4.5 4.5 4.5 6.5 5.5 7.5M11.5 3.5C12.5 4.5 12.5 6.5 11.5 7.5M4 2.5C2.5 4 2.5 7 4 8.5M13 2.5C14.5 4 14.5 7 13 8.5" stroke="#e8b0b8" stroke-width="0.8" fill="none"/></svg>
<svg style="left:485px;top:745px" width="16" height="16" viewBox="0 0 16 16"><rect width="16" height="16" fill="#d8d8d8"/><path d="M1 9C4 7 8 8 10 12M3 14L12 6" stroke="#fff" stroke-width="2.5"/><path d="M4 2L5 5M10 1.5L12 3.5M7 8L8 10.5M5 12L6 13M6.5 3L8.5 3" stroke="#e00" stroke-width="1.6"/><rect x="1" y="14" width="2" height="2" fill="#00c"/><rect x="12" y="12" width="2" height="3" fill="#ee0"/><rect x="14" y="14" width="2" height="2" fill="#0cc"/></svg>
<div class="t" style="left:505px;top:745px;color:#fff;font-size:12px;letter-spacing:0;">EZNEC Pro/2+&nbsp; v. 7.0</div>
<div style="left:481px;top:766px;width:152px;height:2px;background:#9ad4f4"></div>
<svg style="left:647px;top:747px" width="13" height="13" viewBox="0 0 13 13"><path d="M0.8 0.8H2.8L9.8 2.6V11.2L7 10.6L0.8 9Z" fill="#fff" stroke="#000" stroke-width="1.5" stroke-linejoin="round"/><path d="M1.6 1.9L9 3.7" stroke="#18d8e8" stroke-width="1.3" fill="none"/><path d="M11 9.5L12 11" stroke="#999" stroke-width="1"/></svg>
<div class="t" style="left:665px;top:745px;color:#fff;font-size:12px;letter-spacing:0;">Wires</div>
<div style="left:641px;top:766px;width:152px;height:2px;background:#9ad4f4"></div>
<svg style="left:808px;top:747px" width="13" height="13" viewBox="0 0 13 13"><path d="M0.8 0.8H2.8L9.8 2.6V11.2L7 10.6L0.8 9Z" fill="#fff" stroke="#000" stroke-width="1.5" stroke-linejoin="round"/><path d="M1.6 1.9L9 3.7" stroke="#18d8e8" stroke-width="1.3" fill="none"/><path d="M11 9.5L12 11" stroke="#999" stroke-width="1"/></svg>
<div class="t" style="left:825px;top:745px;color:#fff;font-size:12px;letter-spacing:0;">Sources</div>
<div style="left:801px;top:766px;width:152px;height:2px;background:#9ad4f4"></div>
<div style="left:957px;top:738px;width:160px;height:30px;background:#333"></div>
<svg style="left:967px;top:747px" width="13" height="13" viewBox="0 0 13 13"><path d="M0.8 0.8H2.8L9.8 2.6V11.2L7 10.6L0.8 9Z" fill="#fff" stroke="#000" stroke-width="1.5" stroke-linejoin="round"/><path d="M1.6 1.9L9 3.7" stroke="#18d8e8" stroke-width="1.3" fill="none"/><path d="M11 9.5L12 11" stroke="#999" stroke-width="1"/></svg>
<div class="t" style="left:985px;top:745px;color:#fff;font-size:12px;letter-spacing:0;">Loads (RLC)</div>
<div style="left:957px;top:766px;width:160px;height:2px;background:#9ad4f4"></div>
<div style="left:1160px;top:746px;width:1px;height:15px;background:#5a5a5a"></div>
<div style="left:1164px;top:746px;width:1px;height:15px;background:#5a5a5a"></div>
<div class="t" style="left:1177px;top:743px;color:#fff;font-size:11px;letter-spacing:0;">CS</div>
<svg style="left:1206px;top:745px" width="16" height="16" viewBox="0 0 16 16"><circle cx="5" cy="5" r="4.5" fill="#1030d0"/><circle cx="5" cy="5" r="3" fill="#fff"/><path d="M5 3V5H7" stroke="#d00"/><rect x="6" y="8" width="9" height="8" rx="2" fill="#bbb"/><path d="M9 10V14M12 10V14" stroke="#333" stroke-width="1.5"/></svg>
<svg style="left:1231px;top:745px" width="16" height="17" viewBox="0 0 16 17"><path d="M7 0L13 2V8C13 12 10 14 7 15C4 14 1 12 1 8V2Z" fill="#fff"/><path d="M7 0V15M1 7H13" stroke="#101010" stroke-width="1"/><circle cx="12" cy="12.5" r="4" fill="#20a040"/><path d="M10 12.5L11.5 14L14 11" stroke="#fff" stroke-width="1.2" fill="none"/></svg>
<svg style="left:1253px;top:746px" width="18" height="15" viewBox="0 0 18 15"><path d="M1 2V5C1 7 3 8 4 8V14M0 2H7M2.5 0V2M5.5 0V2M1 5H7V5C7 7 5 8 4 8" stroke="#fff" fill="none"/><rect x="6.5" y="4.5" width="10" height="7" stroke="#fff" fill="none"/><path d="M9 6L13 10M13 6L9 10" stroke="#fff"/><rect x="16.5" y="6.5" width="1.5" height="3" fill="#fff"/></svg>
<svg style="left:1280px;top:746px" width="15" height="15" viewBox="0 0 15 15"><path d="M1 14C1 7 7 1 14 1M3.5 14C3.5 8.5 8.5 3.5 14 3.5M6 14C6 10 10 6 14 6M8.5 14C8.5 11 11 8.5 14 8.5" stroke="#ddd" fill="none"/><circle cx="12" cy="12.5" r="1.6" fill="#fff"/></svg>
<svg style="left:1301px;top:745px" width="17" height="16" viewBox="0 0 17 16"><path d="M1 5.5H4L8.5 1.5V14.5L4 10.5H1Z" stroke="#fff" fill="none"/><path d="M11 5C12 6.5 12 9.5 11 11M13 3C15 6 15 10 13 13M15 1.5C17.5 5 17.5 11 15 14.5" stroke="#fff" fill="none"/></svg>
<div class="t" style="left:1328px;top:745px;color:#fff;font-size:12px;letter-spacing:0;">20:18</div>
<div style="left:1361px;top:738px;width:1px;height:30px;background:#5a5a5a"></div>
</body></html>
